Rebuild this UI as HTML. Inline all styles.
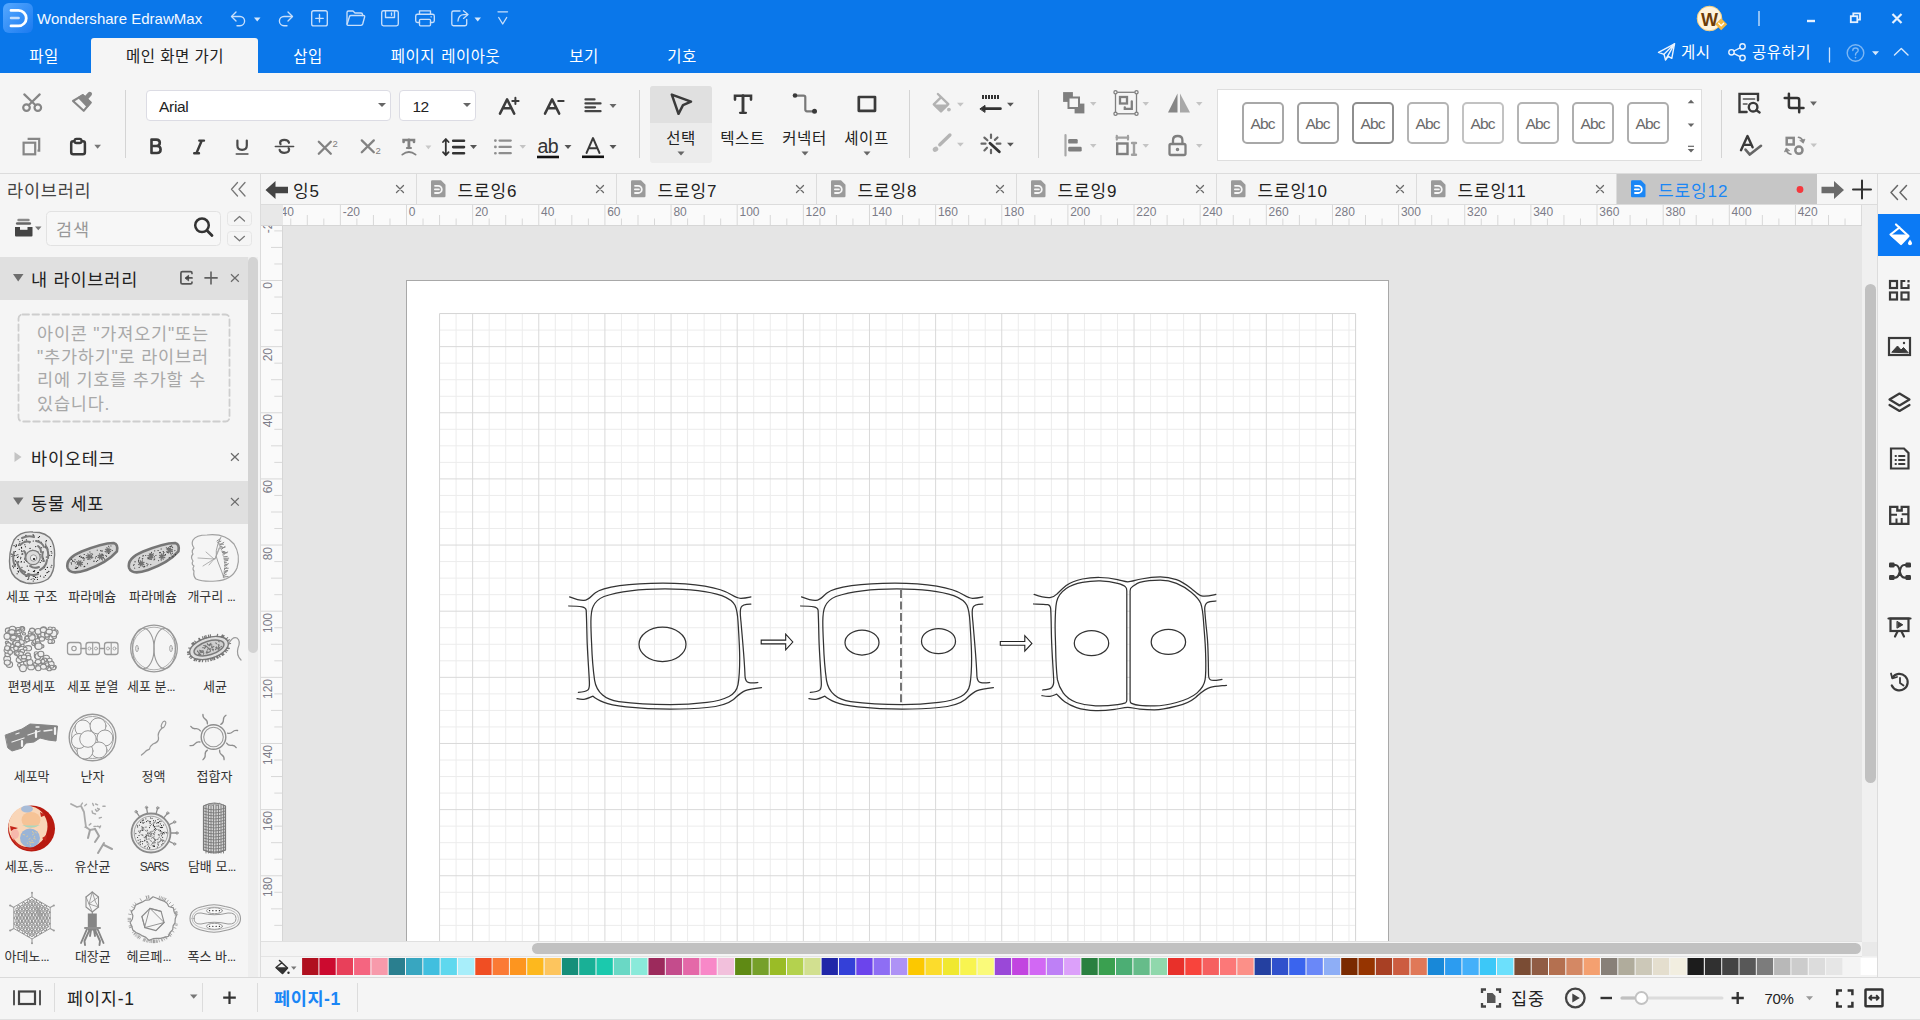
<!DOCTYPE html>
<html lang="ko">
<head>
<meta charset="utf-8">
<title>Wondershare EdrawMax</title>
<style>
*{box-sizing:border-box;margin:0;padding:0}
html,body{width:1920px;height:1020px;overflow:hidden;background:#f5f5f5}
body{font-family:"Liberation Sans","Noto Sans CJK KR",sans-serif;color:#222;position:relative}
.abs{position:absolute}
.t{position:absolute;white-space:nowrap;line-height:1}
svg{position:absolute;overflow:visible}
#titlebar{position:absolute;left:0;top:0;width:1920px;height:73px;background:#0a77ea}
#maintab{position:absolute;left:91px;top:38px;width:167px;height:36px;background:#f5f5f5;border-radius:3px 3px 0 0}
.menu{position:absolute;top:46.5px;letter-spacing:0.5px;font-size:15.5px;color:#fff;white-space:nowrap;line-height:19px;transform:translateX(-50%)}
#ribbon{position:absolute;left:0;top:73px;width:1920px;height:100px;background:#f5f5f5}
.vsep{position:absolute;width:1px;background:#d4d4d4}
.dd{position:absolute;width:0;height:0;border-left:3.5px solid transparent;border-right:3.5px solid transparent;border-top:4px solid #555}
.dd.l{border-top-color:#bdbdbd}
.abc{position:absolute;top:102px;width:42px;height:42px;border:2px solid #aaa;border-radius:5px;background:#fff;font-size:15.5px;color:#6a6a6a;text-align:center;line-height:39px;letter-spacing:-0.8px;text-indent:-0.8px}
.tabt{top:183px;font-size:17px;letter-spacing:0.9px;color:#222}
.k{font-size:17.5px;letter-spacing:0.8px}
.rl{font-size:12px;color:#7c7c88;letter-spacing:0}
.rv{transform-origin:0 0;transform:rotate(-90deg) translateX(-100%)}
.lb{font-size:13px;color:#333}
</style>
</head>
<body>
<div id="titlebar">
  <!-- logo -->
  <svg style="left:3px;top:3px" width="30" height="30" viewBox="0 0 30 30">
    <defs><linearGradient id="lg" x1="0" y1="0" x2="1" y2="1"><stop offset="0" stop-color="#55a8ff"/><stop offset="1" stop-color="#1a7af0"/></linearGradient></defs>
    <rect x="0" y="0" width="30" height="30" rx="6" fill="url(#lg)"/>
    <path d="M8 7.4 H15.5 A7.75 7.75 0 0 1 15.5 22.9 H8" fill="none" stroke="#fff" stroke-width="2.8" stroke-linecap="round"/>
    <path d="M8 15.1 H15.6" fill="none" stroke="#c4defd" stroke-width="2.5" stroke-linecap="round"/>
  </svg>
  <div class="t" style="left:37px;top:11px;font-size:15px;color:#f4f9ff;letter-spacing:0.02px">Wondershare EdrawMax</div>
  <!-- quick access icons -->
  <svg style="left:229px;top:8px" width="290" height="22" viewBox="229 8 290 22" fill="none" stroke="#c8dffb" stroke-width="1.35" stroke-linecap="round" stroke-linejoin="round">
    <!-- undo -->
    <path d="M236 12 L231.5 16.5 L236 21"/><path d="M232 16.5 H240 A4.6 4.6 0 0 1 240 25.7 H237"/>
    <path d="M254 17.5 L260.5 17.5 L257.2 21.5 Z" fill="#d6e8fc" stroke="none"/>
    <!-- redo -->
    <path d="M288 12 L292.5 16.5 L288 21"/><path d="M292 16.5 H284 A4.6 4.6 0 0 0 284 25.7 H287"/>
    <!-- new -->
    <rect x="311.7" y="10.7" width="15.6" height="15.2" rx="2"/><path d="M319.5 14.5 V22 M315.7 18.3 H323.3"/>
    <!-- open -->
    <path d="M347 24 V12.5 Q347 11 348.5 11 H353 L355 13 H361 Q362.5 13 362.5 14.5 V15.5"/><path d="M347 24.5 L349.5 16.5 Q349.8 15.5 351 15.5 H363.5 Q365 15.5 364.6 17 L362.7 24 Q362.3 25.3 361 25.3 H348 Q347 25.3 347 24.5 Z"/>
    <!-- save -->
    <path d="M383.5 10.7 H396.5 Q398.3 10.7 398.3 12.5 V24 Q398.3 25.8 396.5 25.8 H383.5 Q381.7 25.8 381.7 24 V12.5 Q381.7 10.7 383.5 10.7 Z"/><path d="M385.5 11 V17.5 H394.5 V11"/><path d="M391.5 13 V15.3"/>
    <!-- print -->
    <path d="M419.5 14 V10.8 H430.5 V14"/><path d="M419.5 22.5 H417.5 Q415.7 22.5 415.7 20.7 V16 Q415.7 14.2 417.5 14.2 H432.5 Q434.3 14.2 434.3 16 V20.7 Q434.3 22.5 432.5 22.5 H430.5"/><rect x="419.5" y="19.3" width="11" height="6.5" rx="1"/><path d="M431 16.8 H431.3"/>
    <!-- export -->
    <path d="M460 11 H453.5 Q451.8 11 451.8 12.7 V24 Q451.8 25.7 453.5 25.7 H465 Q466.7 25.7 466.7 24 V19.5"/><path d="M463.5 10.8 L468 14.6 L463.5 18.4"/><path d="M467.5 14.6 H464 Q458.5 14.6 458 21"/>
    <path d="M474.5 17.5 L481 17.5 L477.7 21.5 Z" fill="#d6e8fc" stroke="none"/>
    <!-- customize -->
    <path d="M498 11.8 H507.5"/><path d="M498.7 17.5 L502.7 24 L506.7 17.5"/>
  </svg>
  <!-- avatar -->
  <svg style="left:1696px;top:5px" width="32" height="30" viewBox="1696 5 32 30">
    <circle cx="1709.5" cy="18.5" r="12.3" fill="#fff4dd" stroke="#f7cf7c" stroke-width="1"/>
    <path d="M1721.2 18.3 L1727.2 24.2 L1721.2 30.2 L1715.2 24.2 Z" fill="#f5b942"/>
    <path d="M1718.7 23.3 L1721.2 25.8 L1723.7 23.3" fill="none" stroke="#fff" stroke-width="1.3" stroke-linecap="round" stroke-linejoin="round"/>
    <text x="1701" y="25.5" font-family="Liberation Sans,sans-serif" font-weight="bold" font-size="18" fill="#6b3c08" letter-spacing="-1">W</text>
  </svg>
  <div class="abs" style="left:1758px;top:11px;width:2px;height:15px;background:#8dc0f6"></div>
  <svg style="left:1800px;top:10px" width="110" height="18" viewBox="1800 10 110 18" fill="none" stroke="#e6f1fe" stroke-width="1.8">
    <path d="M1807 21 H1815" stroke-width="2.4"/>
    <rect x="1850.8" y="16.2" width="6.5" height="6" /><path d="M1853.3 16 V13.4 H1860 V19.6 H1857.6"/>
    <path d="M1892.5 14 L1901.5 23 M1901.5 14 L1892.5 23" stroke-width="2.2"/>
  </svg>
  <!-- menu tabs -->
  <div id="maintab"></div>
  <div class="menu" style="left:44px">파일</div>
  <div class="menu" style="left:175px;color:#222">메인 화면 가기</div>
  <div class="menu" style="left:308px">삽입</div>
  <div class="menu" style="left:445.5px;word-spacing:1.5px">페이지 레이아웃</div>
  <div class="menu" style="left:584px">보기</div>
  <div class="menu" style="left:682px">기호</div>
  <!-- right menu -->
  <svg style="left:1656px;top:42px" width="260" height="22" viewBox="1656 42 260 22" fill="none" stroke="#eaf3fe" stroke-width="1.4" stroke-linecap="round" stroke-linejoin="round">
    <path d="M1674.5 43.8 L1658.5 52.3 L1664 54.3 L1665.5 59.8 L1668.3 56.3 L1671.8 58.3 Z"/><path d="M1674.5 43.8 L1664 54.3 M1674.5 43.8 L1665.5 59.8"/>
    <circle cx="1742.5" cy="46.5" r="2.7"/><circle cx="1731.5" cy="52.3" r="2.7"/><circle cx="1742.5" cy="58" r="2.7"/><path d="M1734 51 L1740 47.8 M1734 53.6 L1740 56.7"/>
    <path d="M1829.5 48 V62" stroke="#cfe3fb" stroke-width="1.3"/>
    <circle cx="1855.5" cy="53" r="8.3" stroke="#7db7f4"/>
    <path d="M1852.8 50.5 Q1852.8 48 1855.5 48 Q1858.2 48 1858.2 50.3 Q1858.2 51.8 1856.5 52.7 Q1855.5 53.3 1855.5 55" stroke="#7db7f4"/><path d="M1855.5 57.5 V57.8" stroke="#7db7f4" stroke-width="1.6"/>
    <path d="M1872 51.3 L1879 51.3 L1875.5 55.3 Z" fill="#d6e8fc" stroke="none"/>
    <path d="M1894.5 55 L1901.3 48.5 L1908 55" stroke="#d6e8fc"/>
  </svg>
  <div class="t" style="left:1681px;top:44.5px;font-size:15.5px;letter-spacing:0.4px;color:#fff">게시</div>
  <div class="t" style="left:1752px;top:44.5px;font-size:15.5px;letter-spacing:0.5px;color:#fff">공유하기</div>
</div>
<div id="ribbon"></div>
<!-- clipboard group -->
<svg style="left:0;top:73px" width="640" height="100" viewBox="0 73 640 100" fill="none" stroke-linecap="round" stroke-linejoin="round">
  <!-- scissors -->
  <g stroke="#868686" stroke-width="2.2">
    <path d="M24.3 94.4 L35.6 105.3 M39.7 94.4 L28.6 105.3"/><circle cx="26.5" cy="107.6" r="3.3"/><circle cx="37.8" cy="107.6" r="3.3"/>
  </g>
  <!-- format painter -->
  <g stroke="#868686" stroke-width="2.1">
    <path d="M73 101 L82.9 95.2 L90.6 102.5 L83.7 110.8 Z"/><path d="M82.9 95.2 L90.6 102.5 L87.3 106.4 L79 97.6 Z" fill="#868686"/><path d="M85.5 98.8 L89.8 94" stroke-width="4.4"/>
  </g>
  <!-- copy -->
  <g stroke="#868686" stroke-width="2.2" stroke-linejoin="miter" stroke-linecap="butt">
    <rect x="23.6" y="142.7" width="11.6" height="11.6"/><path d="M27.6 138.8 H39.2 V150.6 H37.5"/>
  </g>
  <!-- paste -->
  <g stroke="#3a3a3a" stroke-width="2.5">
    <rect x="71.2" y="141.3" width="13.7" height="12.9" rx="2"/><rect x="74.6" y="138.8" width="6.9" height="4.2" rx="1.8" fill="#f5f5f5" stroke-width="2.3"/>
  </g>
  <path d="M94.3 144.8 L101 144.8 L97.6 148.8 Z" fill="#777"/>
  <!-- B I U S -->
  <g stroke="#3a3a3a" stroke-width="2.6">
    <path d="M151.5 139.6 V153 M151.5 139.6 H156.3 Q159.8 139.6 159.8 142.8 Q159.8 146 156.3 146 H151.5 M156.3 146 H157 Q160.6 146 160.6 149.5 Q160.6 153 157 153 H151.5"/>
    <path d="M199.3 140.6 H204 M194.2 153.2 H199 M201.7 140.8 L196.5 153" stroke-width="2.4"/>
  </g>
  <g stroke="#4a4a4a" stroke-width="2.2">
    <path d="M237.4 140.6 V145.5 Q237.4 149.8 242.1 149.8 Q246.8 149.8 246.8 145.5 V140.6"/><path d="M236.3 154 H247.9" stroke-width="1.6"/>
    <path d="M275.3 146.4 H293.6" stroke-width="1.5"/><path d="M289 142.8 Q288.3 139.9 284.3 139.9 Q280.3 139.9 280.1 142.6 Q280.1 143.5 280.6 144.2 M279.6 149.8 Q280.2 152.8 284.4 152.8 Q288.9 152.8 289.1 149.8 Q289.1 148.8 288.6 148.2"/>
  </g>
  <!-- x2 x_2 -->
  <g stroke="#828282" stroke-width="2.3">
    <path d="M318.8 141.8 L330.8 153.8 M330.8 141.8 L318.8 153.8"/>
    <path d="M361.8 140.4 L373.8 152.2 M373.8 140.4 L361.8 152.2"/>
  </g>
  <text x="332.6" y="146.8" font-family="Liberation Sans,sans-serif" font-size="9.5" fill="#808080" stroke="none">2</text>
  <text x="375.5" y="154.4" font-family="Liberation Sans,sans-serif" font-size="9.5" fill="#808080" stroke="none">2</text>
  <!-- text effect T -->
  <g stroke="#828282" stroke-width="2.6">
    <path d="M403.6 142 V140 H414 V142" stroke-linejoin="miter"/><path d="M408.9 140 V147.8" stroke-width="2.8"/><path d="M406.9 148 H411" stroke-width="2"/><path d="M402.3 154.6 Q408.9 149.3 415.6 154.6" stroke-width="1.8"/>
  </g>
  <path d="M425.4 145.6 L431.4 145.6 L428.4 149.2 Z" fill="#c8c8c8"/>
  <!-- line spacing -->
  <g stroke="#333" stroke-width="1.8">
    <path d="M445.8 139.3 V154.8 M443 142 L445.8 139 L448.6 142 M443 152.2 L445.8 155.2 L448.6 152.2"/>
    <path d="M453.2 140.8 H464 M453.2 147.1 H464 M453.2 153.3 H464" stroke-width="2.6"/>
  </g>
  <path d="M470 145 L477 145 L473.5 149 Z" fill="#555"/>
  <!-- bullets -->
  <g stroke="#8e8e8e" stroke-width="2.2" stroke-linecap="round">
    <path d="M499.5 140.6 H510.8 M499.5 146.9 H510.8 M499.5 153.2 H510.8"/><path d="M495.3 140.6 H495.5 M495.3 146.9 H495.5 M495.3 153.2 H495.5" stroke-width="2.6"/>
  </g>
  <path d="M519.5 145 L526 145 L522.8 148.7 Z" fill="#c4c4c4"/>
  <!-- ab -->
  <text x="537.5" y="153" font-family="Liberation Sans,sans-serif" font-size="19.5" fill="#333" letter-spacing="-0.6">ab</text>
  <path d="M537 157 H559" stroke="#111" stroke-width="2.6" stroke-linecap="butt"/>
  <path d="M564.5 145 L571.5 145 L568 149 Z" fill="#555"/>
  <!-- font color A -->
  <path d="M586.5 153 L593 138 L599.5 153 M588.7 148.3 H597.3" stroke="#3a3a3a" stroke-width="1.9"/>
  <path d="M582 156.8 H604" stroke="#111" stroke-width="2.6" stroke-linecap="butt"/>
  <path d="M609.5 145 L616.5 145 L613 149 Z" fill="#555"/>
  <!-- A+ A- -->
  <g stroke="#3c3c3c" stroke-width="2.5">
    <path d="M500 113.6 L507.1 99.4 L514.2 113.6 M502.8 108.3 H511.4"/><path d="M512.3 100.9 H518.6 M515.4 97.8 V104" stroke-width="2"/>
    <path d="M545 113.6 L552.1 99.4 L559.2 113.6 M547.8 108.3 H556.4"/><path d="M558.2 101 H563.6" stroke-width="2"/>
  </g>
  <!-- align -->
  <g stroke="#444" stroke-width="2.3">
    <path d="M585.5 99.4 H594.5 M585.5 103.4 H600.5 M585.5 107.3 H595 M585.5 111.2 H600.5"/>
  </g>
  <path d="M609.5 104 L616.5 104 L613 108 Z" fill="#666"/>
</svg>
<div class="vsep" style="left:125px;top:90px;height:68px"></div>
<div class="abs" style="left:146px;top:90px;width:245px;height:31px;background:#fff;border:1px solid #dcdce4;border-radius:4px"></div>
<div class="t" style="left:159px;top:98.8px;font-size:15.5px;color:#222;letter-spacing:-0.3px">Arial</div>
<div class="dd" style="left:378px;top:102.5px;border-top-color:#666;border-left-width:4px;border-right-width:4px;border-top-width:4.5px"></div>
<div class="abs" style="left:399px;top:90px;width:77px;height:31px;background:#fff;border:1px solid #dcdce4;border-radius:4px"></div>
<div class="t" style="left:412.5px;top:98.8px;font-size:15.5px;color:#222;letter-spacing:-0.5px">12</div>
<div class="dd" style="left:463px;top:102.5px;border-top-color:#666;border-left-width:4px;border-right-width:4px;border-top-width:4.5px"></div>
<div class="vsep" style="left:639px;top:90px;height:68px"></div>
<!-- big tool buttons -->
<div class="abs" style="left:650px;top:86px;width:62px;height:77px;background:#ececec;border-radius:3px"></div>
<div class="abs" style="left:650px;top:86px;width:62px;height:37px;background:#e0e0e0;border-radius:3px 3px 0 0"></div>
<svg style="left:640px;top:73px" width="600" height="100" viewBox="640 73 600 100" fill="none" stroke-linecap="round" stroke-linejoin="round">
  <!-- cursor -->
  <path d="M671.8 94.6 L691 101.6 L683 105.2 L678.5 113.8 Z" stroke="#3a3a3a" stroke-width="2.5"/>
  <!-- T -->
  <path d="M735 99.6 V95.8 H751 V99.6" stroke="#3a3a3a" stroke-width="2.6" stroke-linejoin="miter"/><path d="M743 95.8 V112.5" stroke="#3a3a3a" stroke-width="2.9"/><path d="M740 112.8 H746" stroke="#3a3a3a" stroke-width="2.2"/>
  <!-- connector -->
  <path d="M797 95.6 H803.6 Q805.3 95.6 805.3 97.3 V109.6 Q805.3 111.3 807 111.3 H812" stroke="#787878" stroke-width="2.2"/>
  <circle cx="795" cy="95.5" r="2.3" fill="#3a3a3a"/><circle cx="814.5" cy="111.3" r="2.5" fill="#3a3a3a"/>
  <!-- shape -->
  <rect x="858.8" y="97" width="16.2" height="13.8" stroke="#3a3a3a" stroke-width="2.7" stroke-linejoin="round"/>
  <!-- dropdowns -->
  <path d="M677.5 151.5 L684.5 151.5 L681 155.5 Z" fill="#666"/>
  <path d="M801.5 151.5 L808.5 151.5 L805 155.5 Z" fill="#666"/>
  <path d="M863.5 151.5 L870.5 151.5 L867 155.5 Z" fill="#666"/>
  <!-- fill (disabled) -->
  <g stroke="#b2b2b2" stroke-width="2.4">
    <path d="M937.9 94 L948.3 104.2 L941 111.5 L933.8 104.3 L941.2 97.2"/><path d="M935 105.2 H947 L941 111 Z" fill="#b2b2b2" stroke-width="1.6"/>
  </g>
  <circle cx="948.9" cy="109.6" r="1.9" fill="#b8b8b8"/>
  <path d="M957 102.8 L963.8 102.8 L960.4 106.4 Z" fill="#c4c4c4"/>
  <!-- line style -->
  <path d="M982 97 H999" stroke="#333" stroke-width="4" stroke-dasharray="2 1" stroke-linecap="butt"/>
  <path d="M984.5 108.7 H1000.4" stroke="#333" stroke-width="2.8" stroke-linecap="round"/><path d="M980.2 108.7 L985 105.4 V112 Z" fill="#333" stroke="#333" stroke-width="1" stroke-linejoin="round"/>
  <path d="M1007 102.8 L1013.8 102.8 L1010.4 106.6 Z" fill="#555"/>
  <!-- brush (disabled) -->
  <path d="M949.9 135 L939.8 144.8" stroke="#b4b4b4" stroke-width="3.4"/><ellipse cx="935.5" cy="149.3" rx="2.9" ry="2.4" transform="rotate(-35 935.5 149.3)" fill="#b8b8b8"/>
  <path d="M957 142.8 L963.8 142.8 L960.4 146.4 Z" fill="#c4c4c4"/>
  <!-- magic wand -->
  <g stroke="#686868" stroke-width="2.2">
    <path d="M991 134.6 V138 M991 149.9 V153.2 M981.5 143.7 H985.5 M996.7 143.7 H1000.4 M984.4 137.6 L987.4 140.3 M994.9 139.9 L997.5 137.5 M984.4 150.4 L987 147.7"/><path d="M990 143.2 L999.3 151.7" stroke="#333" stroke-width="2.9"/>
  </g>
  <path d="M1007 142.8 L1013.8 142.8 L1010.4 146.6 Z" fill="#555"/>
  <!-- arrange -->
  <g stroke="#7f7f7f" stroke-width="1.8" stroke-linejoin="miter">
    <rect x="1064" y="93" width="8" height="8" fill="#7f7f7f"/><rect x="1075.5" y="104.5" width="8" height="8" fill="#7f7f7f"/><rect x="1068.5" y="97.5" width="10.5" height="10.5" fill="#f5f5f5" stroke-width="2"/>
  </g>
  <path d="M1090 102 L1096.5 102 L1093.3 105.7 Z" fill="#c4c4c4"/>
  <!-- group -->
  <g stroke="#7f7f7f" stroke-width="1.3" stroke-linejoin="miter">
    <rect x="1115.5" y="92.3" width="21" height="21.5"/>
    <circle cx="1115.5" cy="92.3" r="1.6" fill="#f5f5f5"/><circle cx="1136.5" cy="92.3" r="1.6" fill="#f5f5f5"/><circle cx="1115.5" cy="113.8" r="1.6" fill="#f5f5f5"/><circle cx="1136.5" cy="113.8" r="1.6" fill="#f5f5f5"/>
    <rect x="1120" y="97" width="7" height="6.5" stroke-width="2.3"/><path d="M1131.8 101.3 V108.8 H1124.8 V107.3" stroke-width="2.3"/>
  </g>
  <path d="M1142.5 102 L1149 102 L1145.8 105.7 Z" fill="#c4c4c4"/>
  <!-- flip -->
  <path d="M1177.5 93.5 V112.5 H1168 Z" fill="#868686"/><path d="M1180 93.5 V112.5 H1190 Z" fill="#a8a8a8"/>
  <path d="M1196 102 L1202.5 102 L1199.3 105.7 Z" fill="#c4c4c4"/>
  <!-- align -->
  <path d="M1065.5 135 V155.5" stroke="#a8a8a8" stroke-width="2.2"/><rect x="1068.2" y="139" width="9.5" height="4.6" rx="1.2" fill="#7f7f7f"/><rect x="1068.2" y="146.8" width="13.5" height="4.6" rx="1.2" fill="#7f7f7f"/>
  <path d="M1090 144 L1096.5 144 L1093.3 147.7 Z" fill="#c4c4c4"/>
  <!-- size -->
  <g stroke="#7f7f7f" stroke-width="2" stroke-linejoin="miter">
    <rect x="1117.2" y="143.5" width="10.3" height="10.5" stroke-width="2.4"/><path d="M1116.5 137.7 H1128.2 M1116.8 135.8 V139.6 M1128 135.8 V139.6" stroke-width="2.2" stroke="#a0a0a0"/><path d="M1134 143 V154.8 M1132 143 H1136 M1132 154.8 H1136" stroke-width="2.4" stroke="#a0a0a0"/>
  </g>
  <path d="M1142.5 144 L1149 144 L1145.8 147.7 Z" fill="#c4c4c4"/>
  <!-- lock -->
  <g stroke="#7f7f7f" stroke-width="2.3">
    <rect x="1169.5" y="144" width="16" height="11" rx="1.5"/><path d="M1173 143.5 V140.3 Q1173 136 1177.7 136 Q1182.4 136 1182.4 140.3 V143.5"/><circle cx="1177.5" cy="149.5" r="0.6" fill="#7f7f7f"/>
  </g>
  <path d="M1196 144 L1202.5 144 L1199.3 147.7 Z" fill="#c4c4c4"/>
</svg>
<div class="t" style="left:681px;top:130.5px;font-size:15.5px;letter-spacing:0.5px;color:#222;transform:translateX(-50%)">선택</div>
<div class="t" style="left:742.5px;top:130.5px;font-size:15.5px;letter-spacing:0.5px;color:#222;transform:translateX(-50%)">텍스트</div>
<div class="t" style="left:804.5px;top:130.5px;font-size:15.5px;letter-spacing:0.5px;color:#222;transform:translateX(-50%)">커넥터</div>
<div class="t" style="left:866.5px;top:130.5px;font-size:15.5px;letter-spacing:0.5px;color:#222;transform:translateX(-50%)">셰이프</div>
<div class="vsep" style="left:909px;top:90px;height:68px"></div>
<div class="vsep" style="left:1038px;top:90px;height:68px"></div>
<!-- style gallery -->
<div class="abs" style="left:1217px;top:89px;width:485px;height:72px;background:#fff;border:1px solid #dedede"></div>
<div class="abc" style="left:1242px;border-color:#a8a8a8">Abc</div>
<div class="abc" style="left:1297px;border-color:#a0a0a0">Abc</div>
<div class="abc" style="left:1352px;border-color:#8e8e8e">Abc</div>
<div class="abc" style="left:1407px;border-color:#b4b4b4">Abc</div>
<div class="abc" style="left:1462px;border-color:#c2c2c2">Abc</div>
<div class="abc" style="left:1517px;border-color:#b4b4b4">Abc</div>
<div class="abc" style="left:1572px;border-color:#aeaeae">Abc</div>
<div class="abc" style="left:1627px;border-color:#aeaeae">Abc</div>
<svg style="left:1685px;top:95px" width="12" height="62" viewBox="1685 95 12 62">
  <path d="M1687.7 103.3 L1691 99.8 L1694.3 103.3 Z" fill="#666"/><path d="M1687.7 123.5 L1691 127 L1694.3 123.5 Z" fill="#666"/>
  <path d="M1687.7 149 L1691 152.5 L1694.3 149 Z" fill="#666"/><path d="M1688 146.3 H1694" stroke="#666" stroke-width="1.2"/>
</svg>
<div class="vsep" style="left:1721px;top:90px;height:68px"></div>
<svg style="left:1730px;top:85px" width="100" height="80" viewBox="1730 85 100 80" fill="none" stroke-linecap="round" stroke-linejoin="round">
  <!-- find -->
  <g stroke="#3a3a3a" stroke-width="2.4">
    <path d="M1746.6 112 H1739.5 V93.9 H1758 V100.2" stroke-linejoin="miter"/><path d="M1743.6 99 H1754.4 M1743.6 103.9 H1746.8" stroke="#7a7a7a" stroke-width="2"/>
    <circle cx="1753.1" cy="107.2" r="4.3"/><path d="M1756.4 110.3 L1759.6 112.4"/>
  </g>
  <!-- crop -->
  <g stroke="#333" stroke-width="2.5" stroke-linecap="round" stroke-linejoin="round">
    <path d="M1788.9 93.8 V106 Q1788.9 108 1790.9 108 H1803.5 M1784.7 97.9 H1797.2 Q1799.2 97.9 1799.2 99.9 V112.3"/>
  </g>
  <path d="M1810.1 101.6 L1816.9 101.6 L1813.5 105.8 Z" fill="#666"/>
  <!-- spell check -->
  <g stroke="#3a3a3a" stroke-width="2.4">
    <path d="M1741 150.2 L1747.5 136 L1752.6 147.3 M1743.6 144.9 H1751.4"/><path d="M1745.5 149.6 L1749.8 154.6 L1761 145.8" stroke="#666" stroke-width="2.6"/>
  </g>
  <!-- replace shape -->
  <g stroke="#888" stroke-width="2.5">
    <rect x="1786.7" y="137.9" width="7" height="6.6" stroke-linejoin="miter"/><circle cx="1798.9" cy="150.2" r="3.6"/>
    <path d="M1798.5 137.3 Q1802 138 1802.8 141" stroke-width="1.6"/><path d="M1800 140.6 L1803.3 143.2 L1804.8 139.6 Z" fill="#888" stroke-width="0.8"/>
    <path d="M1791 154.2 Q1787.5 153.8 1786.6 150.8" stroke-width="1.6"/><path d="M1784.6 151.5 L1786.2 148 L1789.4 150.4 Z" fill="#888" stroke-width="0.8"/>
  </g>
  <path d="M1810.5 143.5 L1817 143.5 L1813.8 147.2 Z" fill="#c4c4c4"/>
</svg>
<!-- separator line under ribbon -->
<div class="abs" style="left:0;top:173px;width:1920px;height:1px;background:#dcdcdc"></div>
<!-- left library panel -->
<div class="abs" style="left:260px;top:174px;width:1px;height:804px;background:#dcdcdc"></div>
<div class="t" style="left:7px;top:183px;font-size:17.5px;letter-spacing:0.8px;color:#444">라이브러리</div>
<svg style="left:0;top:174px" width="260" height="130" viewBox="0 174 260 130" fill="none" stroke-linecap="round" stroke-linejoin="round">
  <path d="M237.5 182.5 L231.5 189.3 L237.5 196 M245 182.5 L239 189.3 L245 196" stroke="#777" stroke-width="1.3"/>
  <!-- library icon -->
  <path d="M18.6 220 H28.4" stroke="#8a8a8a" stroke-width="2.6"/><path d="M17.2 223.5 H29.8" stroke="#666" stroke-width="2.6"/>
  <path d="M15 227 H32.5 V235.5 Q32.5 236.5 31.5 236.5 H16 Q15 236.5 15 235.5 Z" fill="#444" stroke="none"/><path d="M20 227 V229.8 H27.5 V227" fill="#f5f5f5" stroke="none"/>
  <path d="M35 226.5 L41.5 226.5 L38.3 230.2 Z" fill="#777"/>
  <!-- search box -->
  <rect x="46.5" y="211.5" width="174" height="34" rx="4" stroke="#e2e2e2" fill="#f7f7f7"/>
  <circle cx="202" cy="225.3" r="6.8" stroke="#333" stroke-width="2.5"/><path d="M207 230.5 L212 235.6" stroke="#333" stroke-width="2.8"/>
  <rect x="227.5" y="211.5" width="24" height="14" rx="3" stroke="#e6e6e6"/><rect x="227.5" y="231.5" width="24" height="14" rx="3" stroke="#e6e6e6"/>
  <path d="M234.5 221 L239.5 216.5 L244.5 221 M234.5 236.3 L239.5 240.8 L244.5 236.3" stroke="#777" stroke-width="1.2"/>
</svg>
<div class="t" style="left:56px;top:222px;font-size:17.5px;letter-spacing:0.8px;color:#999">검색</div>
<!-- scroll track -->
<div class="abs" style="left:248px;top:257px;width:10px;height:721px;background:#eeeeee"></div>
<div class="abs" style="left:248px;top:257px;width:10px;height:396px;background:#d3d3d3;border-radius:5px"></div>
<!-- my library header -->
<div class="abs" style="left:0;top:257px;width:248px;height:43px;background:#e0e0e0"></div>
<div class="t" style="left:31px;top:271.8px;font-size:17.5px;letter-spacing:0.8px;color:#222">내 라이브러리</div>
<svg style="left:0;top:257px" width="248" height="270" viewBox="0 257 248 270" fill="none" stroke-linecap="round" stroke-linejoin="round">
  <path d="M13 274 L23.5 274 L18.2 281.5 Z" fill="#6e6e6e"/>
  <path d="M192 273.4 V273.2 Q192 271.7 190.5 271.7 H182.4 Q180.9 271.7 180.9 273.2 V282.4 Q180.9 283.9 182.4 283.9 H190.5 Q192 283.9 192 282.4 V282.2" stroke="#555" stroke-width="1.7"/><path d="M192 277.9 H186.5" stroke="#555" stroke-width="1.7"/><path d="M185.3 277.9 L188.6 275.3 V280.5 Z" fill="#444" stroke="#444" stroke-width="0.8"/>
  <path d="M211 271.5 V284.4 M204.4 277.9 H217.7" stroke="#606060" stroke-width="1.6" stroke-linecap="butt"/>
  <path d="M231 274.2 L238.8 281.8 M238.8 274.2 L231 281.8" stroke="#6a6a6a" stroke-width="1.2" stroke-linecap="butt"/>
  <!-- dashed box -->
  <rect x="18.5" y="314.5" width="211" height="107" rx="4" stroke="#cecece" stroke-width="1.8" stroke-dasharray="6.5 3.5"/>
  <!-- biotech -->
  <path d="M14.5 452 L21.5 457 L14.5 462 Z" fill="#c4c4c4"/>
  <path d="M231 453.2 L238.8 460.8 M238.8 453.2 L231 460.8" stroke="#6a6a6a" stroke-width="1.2" stroke-linecap="butt"/>
</svg>
<div class="t k" style="left:37px;top:326px;color:#a8a8a8">아이콘 "가져오기"또는</div>
<div class="t k" style="left:37px;top:349px;color:#a8a8a8">"추가하기"로 라이브러</div>
<div class="t k" style="left:37px;top:372.3px;color:#a8a8a8">리에 기호를 추가할 수</div>
<div class="t k" style="left:37px;top:396px;color:#a8a8a8">있습니다.</div>

<div class="t" style="left:31px;top:451px;font-size:17.5px;letter-spacing:0.8px;color:#222">바이오테크</div>
<div class="abs" style="left:0;top:481px;width:248px;height:43px;background:#e0e0e0"></div>
<div class="t" style="left:31px;top:496.3px;font-size:17.5px;letter-spacing:0.8px;color:#222">동물 세포</div>
<svg style="left:0;top:481px" width="248" height="43" viewBox="0 481 248 43" fill="none" stroke-linecap="round">
  <path d="M13 497.5 L23.5 497.5 L18.2 505 Z" fill="#6e6e6e"/>
  <path d="M231 498 L238.8 505.6 M238.8 498 L231 505.6" stroke="#6a6a6a" stroke-width="1.2" stroke-linecap="butt"/>
</svg>
<!-- document tabs -->
<div class="abs" style="left:261px;top:204px;width:1616px;height:1px;background:#dcdcdc"></div>
<div class="abs" style="left:1617px;top:174px;width:200px;height:30px;background:#c6c6c6"></div>
<div class="abs" style="left:416px;top:174px;width:1px;height:30px;background:#dcdcdc"></div>
<div class="abs" style="left:616px;top:174px;width:1px;height:30px;background:#dcdcdc"></div>
<div class="abs" style="left:816px;top:174px;width:1px;height:30px;background:#dcdcdc"></div>
<div class="abs" style="left:1016px;top:174px;width:1px;height:30px;background:#dcdcdc"></div>
<div class="abs" style="left:1216px;top:174px;width:1px;height:30px;background:#dcdcdc"></div>
<div class="abs" style="left:1416px;top:174px;width:1px;height:30px;background:#dcdcdc"></div>
<div class="abs" style="left:1616px;top:174px;width:1px;height:30px;background:#dcdcdc"></div>
<svg style="left:261px;top:174px" width="1616" height="30" viewBox="261 174 1616 30" fill="none" stroke-linecap="round" stroke-linejoin="round">
<path d="M265.5 190 L275.5 181 V186.8 H288 V193.2 H275.5 V199 Z" fill="#444"/>
<path d="M396.5 185.5 L403.5 192.5 M403.5 185.5 L396.5 192.5" stroke="#6a6a6a" stroke-width="1.3"/>
<path d="M431.0 181.5 Q431.0 180.3 432.2 180.3 H441.0 L445.5 184.8 V196 Q445.5 197.2 444.3 197.2 H432.2 Q431.0 197.2 431.0 196 Z" fill="#9a9a9a"/><path d="M435.0 185.8 H438.2 A3.6 3.6 0 0 1 438.2 193 H435.0" stroke="#f5f5f5" stroke-width="1.8"/><path d="M434.8 189.4 H439.0" stroke="#f5f5f5" stroke-width="1.6"/>
<path d="M596.5 185.5 L603.5 192.5 M603.5 185.5 L596.5 192.5" stroke="#6a6a6a" stroke-width="1.3"/>
<path d="M631.0 181.5 Q631.0 180.3 632.2 180.3 H641.0 L645.5 184.8 V196 Q645.5 197.2 644.3 197.2 H632.2 Q631.0 197.2 631.0 196 Z" fill="#9a9a9a"/><path d="M635.0 185.8 H638.2 A3.6 3.6 0 0 1 638.2 193 H635.0" stroke="#f5f5f5" stroke-width="1.8"/><path d="M634.8 189.4 H639.0" stroke="#f5f5f5" stroke-width="1.6"/>
<path d="M796.5 185.5 L803.5 192.5 M803.5 185.5 L796.5 192.5" stroke="#6a6a6a" stroke-width="1.3"/>
<path d="M831.0 181.5 Q831.0 180.3 832.2 180.3 H841.0 L845.5 184.8 V196 Q845.5 197.2 844.3 197.2 H832.2 Q831.0 197.2 831.0 196 Z" fill="#9a9a9a"/><path d="M835.0 185.8 H838.2 A3.6 3.6 0 0 1 838.2 193 H835.0" stroke="#f5f5f5" stroke-width="1.8"/><path d="M834.8 189.4 H839.0" stroke="#f5f5f5" stroke-width="1.6"/>
<path d="M996.5 185.5 L1003.5 192.5 M1003.5 185.5 L996.5 192.5" stroke="#6a6a6a" stroke-width="1.3"/>
<path d="M1031.0 181.5 Q1031.0 180.3 1032.2 180.3 H1041.0 L1045.5 184.8 V196 Q1045.5 197.2 1044.3 197.2 H1032.2 Q1031.0 197.2 1031.0 196 Z" fill="#9a9a9a"/><path d="M1035.0 185.8 H1038.2 A3.6 3.6 0 0 1 1038.2 193 H1035.0" stroke="#f5f5f5" stroke-width="1.8"/><path d="M1034.8 189.4 H1039.0" stroke="#f5f5f5" stroke-width="1.6"/>
<path d="M1196.5 185.5 L1203.5 192.5 M1203.5 185.5 L1196.5 192.5" stroke="#6a6a6a" stroke-width="1.3"/>
<path d="M1231.0 181.5 Q1231.0 180.3 1232.2 180.3 H1241.0 L1245.5 184.8 V196 Q1245.5 197.2 1244.3 197.2 H1232.2 Q1231.0 197.2 1231.0 196 Z" fill="#9a9a9a"/><path d="M1235.0 185.8 H1238.2 A3.6 3.6 0 0 1 1238.2 193 H1235.0" stroke="#f5f5f5" stroke-width="1.8"/><path d="M1234.8 189.4 H1239.0" stroke="#f5f5f5" stroke-width="1.6"/>
<path d="M1396.5 185.5 L1403.5 192.5 M1403.5 185.5 L1396.5 192.5" stroke="#6a6a6a" stroke-width="1.3"/>
<path d="M1431.0 181.5 Q1431.0 180.3 1432.2 180.3 H1441.0 L1445.5 184.8 V196 Q1445.5 197.2 1444.3 197.2 H1432.2 Q1431.0 197.2 1431.0 196 Z" fill="#9a9a9a"/><path d="M1435.0 185.8 H1438.2 A3.6 3.6 0 0 1 1438.2 193 H1435.0" stroke="#f5f5f5" stroke-width="1.8"/><path d="M1434.8 189.4 H1439.0" stroke="#f5f5f5" stroke-width="1.6"/>
<path d="M1596.5 185.5 L1603.5 192.5 M1603.5 185.5 L1596.5 192.5" stroke="#6a6a6a" stroke-width="1.3"/>
<path d="M1631 181.5 Q1631 180.3 1632.2 180.3 H1641 L1645.5 184.8 V196 Q1645.5 197.2 1644.3 197.2 H1632.2 Q1631 197.2 1631 196 Z" fill="#1a86f5"/><path d="M1635 185.8 H1638.2 A3.6 3.6 0 0 1 1638.2 193 H1635" stroke="#fff" stroke-width="1.8"/><path d="M1634.8 189.4 H1639" stroke="#fff" stroke-width="1.6"/>
<circle cx="1800" cy="189.5" r="3.4" fill="#f5383d"/>
<path d="M1844 190 L1834 181 V186.8 H1821.5 V193.2 H1834 V199 Z" fill="#6a6a6a"/>
<path d="M1862 180.5 V198.5 M1853 189.5 H1871" stroke="#333" stroke-width="2"/>
</svg>
<div class="t tabt" style="left:293px">잉5</div>
<div class="t tabt" style="left:457.5px">드로잉6</div>
<div class="t tabt" style="left:657.5px">드로잉7</div>
<div class="t tabt" style="left:857.5px">드로잉8</div>
<div class="t tabt" style="left:1057.5px">드로잉9</div>
<div class="t tabt" style="left:1257.5px">드로잉10</div>
<div class="t tabt" style="left:1457.5px">드로잉11</div>
<div class="t tabt" style="left:1658px;color:#1a86f5">드로잉12</div>
<div class="abs" style="left:283px;top:226px;width:1579px;height:715px;background:#e5e5e5;overflow:hidden">
<div class="abs" style="left:123.0px;top:54.0px;width:983.2px;height:694.5px;background:#fff;border:1px solid #a8a8a8"></div>
<svg style="left:0;top:0" width="1579" height="715" viewBox="0 0 1579 715" fill="none">
<path d="M173.10 87.57 V715.90 M206.18 87.57 V715.90 M222.71 87.57 V715.90 M239.25 87.57 V715.90 M272.31 87.57 V715.90 M288.85 87.57 V715.90 M305.38 87.57 V715.90 M338.45 87.57 V715.90 M354.99 87.57 V715.90 M371.52 87.57 V715.90 M404.59 87.57 V715.90 M421.13 87.57 V715.90 M437.67 87.57 V715.90 M470.74 87.57 V715.90 M487.27 87.57 V715.90 M503.81 87.57 V715.90 M536.88 87.57 V715.90 M553.41 87.57 V715.90 M569.94 87.57 V715.90 M603.01 87.57 V715.90 M619.55 87.57 V715.90 M636.09 87.57 V715.90 M669.15 87.57 V715.90 M685.69 87.57 V715.90 M702.23 87.57 V715.90 M735.29 87.57 V715.90 M751.83 87.57 V715.90 M768.37 87.57 V715.90 M801.43 87.57 V715.90 M817.97 87.57 V715.90 M834.50 87.57 V715.90 M867.57 87.57 V715.90 M884.11 87.57 V715.90 M900.64 87.57 V715.90 M933.72 87.57 V715.90 M950.25 87.57 V715.90 M966.78 87.57 V715.90 M999.86 87.57 V715.90 M1016.39 87.57 V715.90 M1032.92 87.57 V715.90 M1065.99 87.57 V715.90 M156.57 104.10 H1072.61 M156.57 137.18 H1072.61 M156.57 153.71 H1072.61 M156.57 170.25 H1072.61 M156.57 203.31 H1072.61 M156.57 219.85 H1072.61 M156.57 236.38 H1072.61 M156.57 269.45 H1072.61 M156.57 285.99 H1072.61 M156.57 302.52 H1072.61 M156.57 335.59 H1072.61 M156.57 352.13 H1072.61 M156.57 368.67 H1072.61 M156.57 401.74 H1072.61 M156.57 418.27 H1072.61 M156.57 434.81 H1072.61 M156.57 467.88 H1072.61 M156.57 484.41 H1072.61 M156.57 500.94 H1072.61 M156.57 534.01 H1072.61 M156.57 550.55 H1072.61 M156.57 567.09 H1072.61 M156.57 600.15 H1072.61 M156.57 616.69 H1072.61 M156.57 633.23 H1072.61 M156.57 666.29 H1072.61 M156.57 682.83 H1072.61 M156.57 699.37 H1072.61" stroke="#ececec" stroke-width="1"/>
<path d="M189.64 87.57 V715.90 M255.78 87.57 V715.90 M321.92 87.57 V715.90 M388.06 87.57 V715.90 M454.20 87.57 V715.90 M520.34 87.57 V715.90 M586.48 87.57 V715.90 M652.62 87.57 V715.90 M718.76 87.57 V715.90 M784.90 87.57 V715.90 M851.04 87.57 V715.90 M917.18 87.57 V715.90 M983.32 87.57 V715.90 M1049.46 87.57 V715.90 M156.57 120.64 H1072.61 M156.57 186.78 H1072.61 M156.57 252.92 H1072.61 M156.57 319.06 H1072.61 M156.57 385.20 H1072.61 M156.57 451.34 H1072.61 M156.57 517.48 H1072.61 M156.57 583.62 H1072.61 M156.57 649.76 H1072.61 M156.57 715.90 H1072.61" stroke="#d9d9d9" stroke-width="1"/>
<path d="M156.57 720 V87.57 H1072.61 V720" stroke="#d4d4d4" stroke-width="1"/>
</svg>
<svg style="left:0;top:0" width="1579" height="715" viewBox="283 226 1579 715" fill="none" stroke="#333" stroke-width="1.25" stroke-linecap="round" stroke-linejoin="round">
<g>
<path d="M569.6 596.9 C575 599 580 600.8 584 600.4 C589 600 591 596 595 593 C603 586.5 630 583 663 583 C695 583 720 587.5 731 594.5 C735 597 737 598.5 741 598.3 C745 598.2 748 597.5 750.9 596.9"/>
<path d="M750.9 604.1 C746 604 742 604.8 741 607.5 C739.5 611 740.5 617 741 622 C742.5 640 744.5 660 745 675.9 C745.2 680 746 682 749 682.6 C752 683.2 755 682.8 757.8 682.5"/>
<path d="M761.5 687.6 C755 688.3 749 689 745.3 690.6 C740 692.8 737 696.5 733.5 699.4 C727 704.5 715 706.8 707 707.5 C695 708.6 682 709 670.3 709 C655 709 638 708 626 706.8 C617 705.8 609 704.5 604 702.4 C599 700.3 595.5 698.5 593 696.2 C590.5 697 588 698.5 585 699.1 C582 699.7 579.5 699.2 577 698.7"/>
<path d="M568.8 606 C574 606.1 578 606.2 582 606.8 C585 607.3 586 608.5 586.2 610.4 C586.8 622 586.8 633 587.2 643.5 C587.8 657 588.8 670 589.4 681.8 C589.6 686 589.5 688.5 588 689.9 C586 691.8 582 692.2 578.4 692.4"/>
<path d="M590.9 621.5 C591 615 591.5 610 593 606.8 C595 602 599 598.5 604 596.5 C620 591 645 588.8 665 588.8 C690 588.8 710 591.5 721.8 595.7 C729 598.5 733 601.5 735 605.3 C737 610 737.7 616 738 621.5 C738.8 634 739.7 647 739.7 658.2 C739.7 668 739.2 678 738 684.7 C737 690 734 694 729 696.5 C722 700 714 701.6 707 702.4 C695 703.8 682 704.6 670.3 704.6 C652 704.6 633 703.5 618.8 701.6 C611 700.5 606 698 602.6 695 C598 691 595.5 686 594.6 680.3 C592.8 668 592 655 591.6 643.5 C591.2 636 590.9 628 590.9 621.5 Z"/>
</g>
<ellipse cx="662.5" cy="644.3" rx="23.5" ry="17.2"/>
<g transform="translate(231.9 0)">
<path d="M569.6 596.9 C575 599 580 600.8 584 600.4 C589 600 591 596 595 593 C603 586.5 630 583 663 583 C695 583 720 587.5 731 594.5 C735 597 737 598.5 741 598.3 C745 598.2 748 597.5 750.9 596.9"/>
<path d="M750.9 604.1 C746 604 742 604.8 741 607.5 C739.5 611 740.5 617 741 622 C742.5 640 744.5 660 745 675.9 C745.2 680 746 682 749 682.6 C752 683.2 755 682.8 757.8 682.5"/>
<path d="M761.5 687.6 C755 688.3 749 689 745.3 690.6 C740 692.8 737 696.5 733.5 699.4 C727 704.5 715 706.8 707 707.5 C695 708.6 682 709 670.3 709 C655 709 638 708 626 706.8 C617 705.8 609 704.5 604 702.4 C599 700.3 595.5 698.5 593 696.2 C590.5 697 588 698.5 585 699.1 C582 699.7 579.5 699.2 577 698.7"/>
<path d="M568.8 606 C574 606.1 578 606.2 582 606.8 C585 607.3 586 608.5 586.2 610.4 C586.8 622 586.8 633 587.2 643.5 C587.8 657 588.8 670 589.4 681.8 C589.6 686 589.5 688.5 588 689.9 C586 691.8 582 692.2 578.4 692.4"/>
<path d="M590.9 621.5 C591 615 591.5 610 593 606.8 C595 602 599 598.5 604 596.5 C620 591 645 588.8 665 588.8 C690 588.8 710 591.5 721.8 595.7 C729 598.5 733 601.5 735 605.3 C737 610 737.7 616 738 621.5 C738.8 634 739.7 647 739.7 658.2 C739.7 668 739.2 678 738 684.7 C737 690 734 694 729 696.5 C722 700 714 701.6 707 702.4 C695 703.8 682 704.6 670.3 704.6 C652 704.6 633 703.5 618.8 701.6 C611 700.5 606 698 602.6 695 C598 691 595.5 686 594.6 680.3 C592.8 668 592 655 591.6 643.5 C591.2 636 590.9 628 590.9 621.5 Z"/>
</g>
<ellipse cx="862" cy="642.5" rx="17" ry="12.5"/><ellipse cx="938.5" cy="641.2" rx="17" ry="12.5"/>
<path d="M901 589.9 V703" stroke="#666" stroke-width="1.8" stroke-dasharray="8 3.6" stroke-linecap="butt"/>
<path d="M761.2 640.1 H785.7 V634.2 L792.8000000000001 642 L785.7 649.8 V643.9 H761.2 Z" fill="#fff" stroke="#222" stroke-width="1.1" stroke-linejoin="miter"/>
<path d="M1000.3 641.5 H1024.8 V635.6 L1031.8999999999999 643.4 L1024.8 651.1999999999999 V645.3 H1000.3 Z" fill="#fff" stroke="#222" stroke-width="1.1" stroke-linejoin="miter"/>
<path d="M1034.1 594.4 C1040 596.5 1046 598 1050 597.6 C1054 597.2 1055 596 1057.5 593.5 C1060 591 1062.5 588.5 1066.2 585.6 C1071 582 1076 580.3 1082.4 579 C1088 577.9 1094 577.4 1100 577.5 C1106 577.6 1112 578.5 1117.6 579.7 C1121.5 580.5 1125 581.9 1127.9 581.9 C1131 581.9 1136 580 1141.2 579 C1147 577.8 1154 576.8 1160.3 576.8 C1166 576.8 1171.5 578 1176.5 579.7 C1182 581.6 1187 585.3 1191.2 588.5 C1195 591.4 1198 595 1201.5 595.9 C1206 597 1211 595.5 1215.9 594.4"/>
<path d="M1215.9 601 C1212 601.2 1209 601.3 1207.4 602.5 C1205 604.3 1204.6 606.5 1204.7 609.1 C1205.2 619 1206.6 629 1207.4 638.5 C1208.3 650 1208.3 662 1208.5 673.8 C1208.5 676.5 1208.6 678.8 1210.3 679.7 C1213 681.2 1218 679.9 1222 679.4"/>
<path d="M1226.5 685.3 C1221 685.9 1215 686.2 1210.3 687.4 C1204.5 689 1200 693.8 1195.6 697.4 C1190 702 1183.5 704.5 1176.5 706.2 C1169.5 708 1162 709.9 1154.4 709.9 C1149 709.9 1144.5 709.6 1139.7 709.1 C1135.5 708.7 1131.5 707.4 1127.9 707.4 C1123.5 707.4 1119 708.9 1114.7 709.4 C1108.5 710.2 1102 710.8 1095.6 710.6 C1089 710.4 1082.5 709.6 1076.5 707.6 C1072 706.1 1068.3 704.3 1064.7 701.8 C1061.5 699.5 1059 696.5 1056.6 694.1 C1054.5 695 1052.5 696 1050 696.3 C1047 696.7 1044.5 696.1 1041.9 695.6"/>
<path d="M1033.5 604 C1038 604.1 1043.5 604 1047.8 604.7 C1049.8 605.1 1050.5 606.8 1050.7 609.1 C1051.3 619 1051.2 629 1051.5 638.5 C1051.9 652 1053 666 1053.7 679.7 C1053.9 683 1053.5 686 1051.5 687.8 C1049.3 689.7 1046 689.8 1042.6 690"/>
<path d="M1055.1 625 C1055.2 617 1055.3 608 1056.6 601.8 C1057.8 596 1061.5 591.8 1066.2 588.5 C1071 585.2 1076.5 583.5 1082.4 582.4 C1088 581.3 1094 580.8 1100 580.9 C1106 581 1112 581.8 1117.6 583.4 C1121 584.3 1124 585.3 1125.7 587.1 C1126.6 588 1126.8 589.5 1126.8 591 L1126.8 700 C1126.8 701.5 1126.5 702.3 1125.5 702.8 C1123 703.8 1120.5 704.3 1117.6 704.7 C1110.5 705.6 1103 706.2 1095.6 705.9 C1089 705.6 1082.5 704.6 1076.5 702.5 C1071 700.5 1066.5 697.5 1063.2 692.9 C1060.3 689 1058.4 684.5 1057.4 679.7 C1056 668.5 1055.8 657 1055.6 645.9 C1055.4 639 1055.1 632 1055.1 625 Z" fill="#fff"/><path d="M1130.1 591 C1130.1 589 1130.5 587.8 1132 587 C1134.5 585.4 1137 583.2 1139.7 582.4 C1146.5 580.5 1153.5 580 1160.3 580 C1166 580 1171.5 581.3 1176.5 583.4 C1182 585.7 1187 588.6 1191.2 592.2 C1195 595.4 1198.8 598.8 1200.7 603.2 C1203 609.7 1203.2 617 1203.7 623.8 C1204.4 633.5 1205.4 643.5 1205.6 653.2 C1205.8 662 1206.3 671.5 1205.1 679.7 C1204.3 685 1201 689.5 1197.1 692.9 C1191.5 697.8 1183.8 700.5 1176.5 702.5 C1169.3 704.5 1161.8 705.9 1154.4 705.9 C1149.5 705.9 1144.5 705.9 1139.7 705.4 C1136.8 705.1 1134 704.3 1131.5 703.3 C1130.3 702.8 1130.1 701.8 1130.1 700.5 Z" fill="#fff"/>
<ellipse cx="1091.5" cy="643.2" rx="17.2" ry="12.5"/><ellipse cx="1168.4" cy="641.9" rx="17.2" ry="12.5"/>
</svg>
</div>
<div class="abs" style="left:261px;top:205px;width:22px;height:21px;background:#e8e8e8"></div>
<div class="abs" style="left:283px;top:205px;width:1579px;height:21px;background:#fafafa;overflow:hidden">
<svg style="left:0;top:0" width="1579" height="21" viewBox="283 205 1579 21" fill="none">
<path d="M340.36 205 V226 M406.50 205 V226 M472.64 205 V226 M538.78 205 V226 M604.92 205 V226 M671.06 205 V226 M737.20 205 V226 M803.34 205 V226 M869.48 205 V226 M935.62 205 V226 M1001.76 205 V226 M1067.90 205 V226 M1134.04 205 V226 M1200.18 205 V226 M1266.32 205 V226 M1332.46 205 V226 M1398.60 205 V226 M1464.74 205 V226 M1530.88 205 V226 M1597.02 205 V226 M1663.16 205 V226 M1729.30 205 V226 M1795.44 205 V226 M1861.58 205 V226" stroke="#d8d8d8" stroke-width="1"/><path d="M290.75 218.5 V226 M307.29 215 V226 M323.82 218.5 V226 M356.89 218.5 V226 M373.43 215 V226 M389.96 218.5 V226 M423.04 218.5 V226 M439.57 215 V226 M456.11 218.5 V226 M489.18 218.5 V226 M505.71 215 V226 M522.25 218.5 V226 M555.32 218.5 V226 M571.85 215 V226 M588.38 218.5 V226 M621.45 218.5 V226 M637.99 215 V226 M654.52 218.5 V226 M687.60 218.5 V226 M704.13 215 V226 M720.66 218.5 V226 M753.74 218.5 V226 M770.27 215 V226 M786.81 218.5 V226 M819.88 218.5 V226 M836.41 215 V226 M852.94 218.5 V226 M886.01 218.5 V226 M902.55 215 V226 M919.09 218.5 V226 M952.15 218.5 V226 M968.69 215 V226 M985.23 218.5 V226 M1018.29 218.5 V226 M1034.83 215 V226 M1051.37 218.5 V226 M1084.43 218.5 V226 M1100.97 215 V226 M1117.51 218.5 V226 M1150.57 218.5 V226 M1167.11 215 V226 M1183.64 218.5 V226 M1216.72 218.5 V226 M1233.25 215 V226 M1249.78 218.5 V226 M1282.86 218.5 V226 M1299.39 215 V226 M1315.92 218.5 V226 M1348.99 218.5 V226 M1365.53 215 V226 M1382.07 218.5 V226 M1415.13 218.5 V226 M1431.67 215 V226 M1448.20 218.5 V226 M1481.28 218.5 V226 M1497.81 215 V226 M1514.35 218.5 V226 M1547.41 218.5 V226 M1563.95 215 V226 M1580.48 218.5 V226 M1613.56 218.5 V226 M1630.09 215 V226 M1646.62 218.5 V226 M1679.69 218.5 V226 M1696.23 215 V226 M1712.76 218.5 V226 M1745.84 218.5 V226 M1762.37 215 V226 M1778.90 218.5 V226 M1811.97 218.5 V226 M1828.51 215 V226 M1845.05 218.5 V226" stroke="#d8d8d8" stroke-width="1"/>
</svg>
<div class="t rl" style="left:-6.5px;top:1px">-40</div>
<div class="t rl" style="left:59.7px;top:1px">-20</div>
<div class="t rl" style="left:125.8px;top:1px">0</div>
<div class="t rl" style="left:191.9px;top:1px">20</div>
<div class="t rl" style="left:258.1px;top:1px">40</div>
<div class="t rl" style="left:324.2px;top:1px">60</div>
<div class="t rl" style="left:390.4px;top:1px">80</div>
<div class="t rl" style="left:456.5px;top:1px">100</div>
<div class="t rl" style="left:522.6px;top:1px">120</div>
<div class="t rl" style="left:588.8px;top:1px">140</div>
<div class="t rl" style="left:654.9px;top:1px">160</div>
<div class="t rl" style="left:721.1px;top:1px">180</div>
<div class="t rl" style="left:787.2px;top:1px">200</div>
<div class="t rl" style="left:853.3px;top:1px">220</div>
<div class="t rl" style="left:919.5px;top:1px">240</div>
<div class="t rl" style="left:985.6px;top:1px">260</div>
<div class="t rl" style="left:1051.8px;top:1px">280</div>
<div class="t rl" style="left:1117.9px;top:1px">300</div>
<div class="t rl" style="left:1184.0px;top:1px">320</div>
<div class="t rl" style="left:1250.2px;top:1px">340</div>
<div class="t rl" style="left:1316.3px;top:1px">360</div>
<div class="t rl" style="left:1382.5px;top:1px">380</div>
<div class="t rl" style="left:1448.6px;top:1px">400</div>
<div class="t rl" style="left:1514.7px;top:1px">420</div>
</div>
<div class="abs" style="left:261px;top:225px;width:1601px;height:1px;background:#d6d6d6"></div>
<div class="abs" style="left:261px;top:226px;width:22px;height:716px;background:#fafafa;overflow:hidden">
<svg style="left:0;top:0" width="22" height="716" viewBox="261 226 22 716" fill="none">
<path d="M261 280.50 H283 M261 346.64 H283 M261 412.78 H283 M261 478.92 H283 M261 545.06 H283 M261 611.20 H283 M261 677.34 H283 M261 743.48 H283 M261 809.62 H283 M261 875.76 H283 M261 941.90 H283" stroke="#d8d8d8" stroke-width="1"/><path d="M274.3 230.90 H283 M271 247.43 H283 M274.3 263.96 H283 M274.3 297.04 H283 M271 313.57 H283 M274.3 330.11 H283 M274.3 363.18 H283 M271 379.71 H283 M274.3 396.25 H283 M274.3 429.31 H283 M271 445.85 H283 M274.3 462.38 H283 M274.3 495.45 H283 M271 511.99 H283 M274.3 528.52 H283 M274.3 561.60 H283 M271 578.13 H283 M274.3 594.66 H283 M274.3 627.74 H283 M271 644.27 H283 M274.3 660.81 H283 M274.3 693.88 H283 M271 710.41 H283 M274.3 726.94 H283 M274.3 760.01 H283 M271 776.55 H283 M274.3 793.09 H283 M274.3 826.15 H283 M271 842.69 H283 M274.3 859.23 H283 M274.3 892.29 H283 M271 908.83 H283 M274.3 925.37 H283" stroke="#d8d8d8" stroke-width="1"/>
</svg>
<div class="t rl rv" style="left:1px;top:-10.1px">-20</div>
<div class="t rl rv" style="left:1px;top:56.0px">0</div>
<div class="t rl rv" style="left:1px;top:122.1px">20</div>
<div class="t rl rv" style="left:1px;top:188.3px">40</div>
<div class="t rl rv" style="left:1px;top:254.4px">60</div>
<div class="t rl rv" style="left:1px;top:320.6px">80</div>
<div class="t rl rv" style="left:1px;top:386.7px">100</div>
<div class="t rl rv" style="left:1px;top:452.8px">120</div>
<div class="t rl rv" style="left:1px;top:519.0px">140</div>
<div class="t rl rv" style="left:1px;top:585.1px">160</div>
<div class="t rl rv" style="left:1px;top:651.3px">180</div>
</div>
<div class="abs" style="left:282px;top:226px;width:1px;height:716px;background:#d6d6d6"></div>
<div class="abs" style="left:261px;top:941px;width:1616px;height:16px;background:#f4f4f4;border-top:1px solid #e0e0e0;border-bottom:1px solid #e4e4e4"></div>
<div class="abs" style="left:1862px;top:205px;width:15px;height:752px;background:#f0f0f0"></div>
<div class="abs" style="left:1862px;top:942px;width:15px;height:14px;background:#e9e9e9"></div>
<div class="abs" style="left:532px;top:943px;width:1329px;height:11px;background:#c1c1c1;border-radius:5.5px"></div>
<div class="abs" style="left:1864.5px;top:284px;width:11px;height:499px;background:#c1c1c1;border-radius:5.5px"></div>
<!-- library thumbnails -->
<svg style="left:0;top:524px" width="248" height="454" viewBox="0 524 248 454" fill="none" stroke="#8c8c8c" stroke-width="1.1" stroke-linecap="round" stroke-linejoin="round">
<path d="M14 540 Q20 531 33 532 Q47 532 52 541 Q56 550 54 560 Q55 572 48 579 Q38 585 26 583 Q13 580 10 568 Q8 553 14 540 Z" fill="#e6e6e6" stroke="#7c7c7c" stroke-width="1.4"/>
<path d="M24.6 541.2h0.1 M38.3 537.5h0.1 M33.5 551.6h0.1 M13.4 558.4h0.1 M12.6 554.8h0.1 M28.8 573.7h0.1 M16.2 544.7h0.1 M37.4 579.5h0.1 M35.2 553.0h0.1 M47.1 547.9h0.1 M24.0 573.2h0.1 M18.6 561.9h0.1 M37.8 551.9h0.1 M34.0 537.0h0.1 M39.6 554.5h0.1 M24.2 562.1h0.1 M30.0 548.4h0.1 M44.4 567.6h0.1 M21.3 561.6h0.1 M33.1 576.0h0.1 M41.6 547.8h0.1 M28.6 570.3h0.1 M17.4 557.5h0.1 M12.6 566.1h0.1 M43.1 561.5h0.1 M47.8 549.1h0.1 M40.2 562.5h0.1 M35.4 555.9h0.1 M30.9 565.9h0.1 M13.5 567.7h0.1 M45.5 547.7h0.1 M27.2 566.1h0.1 M11.9 556.2h0.1 M18.1 539.6h0.1 M16.4 545.9h0.1 M27.4 575.8h0.1 M14.4 555.6h0.1 M34.1 576.4h0.1 M45.4 575.5h0.1 M22.7 553.9h0.1 M26.1 576.4h0.1 M18.4 545.1h0.1 M20.8 557.3h0.1 M35.7 546.6h0.1 M11.2 554.1h0.1 M26.5 561.2h0.1 M51.0 567.1h0.1 M32.7 563.6h0.1 M39.4 536.6h0.1 M48.8 571.4h0.1 M47.7 572.3h0.1 M27.5 553.2h0.1 M15.3 564.4h0.1 M19.8 541.8h0.1 M25.3 536.5h0.1 M15.3 551.5h0.1 M36.8 541.1h0.1 M21.6 550.7h0.1 M26.3 539.9h0.1 M30.6 557.2h0.1 M25.4 546.7h0.1 M45.8 541.7h0.1 M33.2 541.0h0.1 M33.8 535.3h0.1 M33.2 581.0h0.1 M47.3 567.4h0.1 M22.0 551.6h0.1 M18.0 571.1h0.1 M33.4 571.4h0.1 M24.8 544.7h0.1 M46.8 572.7h0.1 M45.4 569.5h0.1 M20.5 558.8h0.1 M25.9 535.4h0.1 M21.9 567.2h0.1 M51.2 555.5h0.1 M51.1 551.5h0.1 M20.3 544.9h0.1 M19.3 543.8h0.1 M37.2 577.2h0.1 M46.3 557.0h0.1 M38.4 572.4h0.1 M14.6 565.7h0.1 M42.5 556.9h0.1 M18.5 571.9h0.1 M25.0 572.4h0.1 M51.8 553.0h0.1 M27.9 579.4h0.1 M41.4 542.2h0.1 M17.1 573.7h0.1 M25.7 560.3h0.1 M51.8 565.2h0.1 M33.1 578.8h0.1 M29.2 575.8h0.1 M45.7 544.1h0.1 M21.6 548.1h0.1 M21.1 562.1h0.1 M21.9 554.1h0.1 M25.9 556.0h0.1 M35.5 577.4h0.1 M28.7 578.1h0.1 M32.1 559.5h0.1 M33.0 534.9h0.1 M29.5 542.8h0.1 M18.2 556.7h0.1 M41.5 560.7h0.1 M24.7 558.9h0.1 M34.3 571.6h0.1 M15.5 560.9h0.1 M21.4 547.3h0.1 M43.4 558.4h0.1 M34.6 570.5h0.1 M49.3 555.3h0.1 M36.7 558.3h0.1 M32.5 567.3h0.1 M30.0 559.6h0.1 M31.1 579.2h0.1 M40.4 576.1h0.1 M50.6 546.5h0.1 M34.5 579.3h0.1 M46.3 540.6h0.1 M16.1 555.2h0.1 M14.0 545.6h0.1 M14.1 566.1h0.1 M43.9 577.1h0.1 M17.5 568.4h0.1 M38.7 540.9h0.1 M27.7 557.4h0.1 M17.8 554.7h0.1 M32.7 550.3h0.1 M19.2 549.3h0.1 M34.3 555.1h0.1 M37.2 558.6h0.1 M15.4 546.7h0.1 M22.4 540.2h0.1 M28.7 577.7h0.1 M45.4 546.4h0.1 M35.0 567.6h0.1 M39.9 554.4h0.1 M37.6 572.5h0.1" stroke="#111" stroke-width="1.1"/>
<path d="M20 545 q5 -5 10 -3 M36 541 q6 1 8 6 M17 562 q2 8 8 10 M40 570 q6 -3 7 -10 M24 551 q3 3 1 8 M43 552 q-2 5 1 9 M28 574 q5 2 10 0 M22 538 q6 -3 12 -1 M46 546 q3 6 2 12 M14 552 q-2 8 1 14 M30 566 q4 3 9 1 M38 546 q3 2 3 6 M20 570 q3 5 9 6" stroke="#7a7a7a" stroke-width="2"/>
<circle cx="33" cy="557.5" r="7.2" fill="#dcdcdc" stroke="#7c7c7c" stroke-width="1.2"/><circle cx="33.5" cy="558" r="3.2" fill="#eee" stroke="#888" stroke-width="0.8"/><circle cx="34" cy="559" r="1.1" fill="#111" stroke="none"/>
<g transform="rotate(-21 92.5 557.5)"><path d="M65.5 558.5 Q66.5 548.5 84.5 548.0 Q106.5 547.5 117.5 551.5 Q121.5 554.5 117.5 560.5 Q104.5 567.5 82.5 567.0 Q65.5 566.5 65.5 558.5 Z" fill="#d6d6d6" stroke="#767676" stroke-width="2.6"/>
<path d="M74.2 561.8h0.1 M73.4 561.9h0.1 M90.5 555.6h0.1 M94.8 562.6h0.1 M82.3 553.1h0.1 M93.7 554.4h0.1 M75.3 553.4h0.1 M72.7 553.9h0.1 M84.2 555.2h0.1 M103.9 555.0h0.1 M92.5 553.6h0.1 M85.8 551.7h0.1 M81.5 551.7h0.1 M102.8 558.1h0.1 M78.8 557.2h0.1 M111.6 552.8h0.1 M106.5 556.7h0.1 M92.3 561.5h0.1 M87.8 557.6h0.1 M100.8 563.3h0.1 M85.6 561.5h0.1 M101.6 559.1h0.1 M88.3 555.7h0.1 M72.9 553.1h0.1 M73.6 560.4h0.1 M81.7 553.5h0.1 M74.2 561.6h0.1 M108.8 559.5h0.1 M82.9 554.4h0.1 M83.4 557.0h0.1 M77.4 556.8h0.1 M82.1 563.0h0.1 M113.3 558.1h0.1 M81.3 563.1h0.1 M84.1 555.8h0.1 M70.5 556.1h0.1 M91.4 557.5h0.1 M79.3 557.6h0.1 M70.7 554.7h0.1 M74.4 556.3h0.1 M72.3 551.8h0.1 M83.9 554.3h0.1 M96.3 557.9h0.1 M103.5 559.4h0.1 M102.0 562.0h0.1 M87.6 555.4h0.1 M113.8 553.3h0.1 M102.4 559.2h0.1 M72.4 561.5h0.1 M109.7 559.0h0.1 M102.8 561.2h0.1 M76.6 557.8h0.1 M92.7 561.5h0.1 M105.9 561.4h0.1 M96.2 562.2h0.1 M100.5 559.8h0.1 M80.6 551.9h0.1 M76.4 555.8h0.1 M75.1 561.5h0.1 M95.1 559.0h0.1 M98.1 559.7h0.1 M92.0 551.5h0.1 M105.6 560.5h0.1 M92.6 557.9h0.1 M99.5 552.3h0.1 M102.9 554.5h0.1 M73.8 554.7h0.1 M102.6 554.0h0.1 M103.1 563.2h0.1 M92.2 556.1h0.1" stroke="#222" stroke-width="1"/>
<path d="M75.5 558.5 h6 M78.5 555.5 v6 M76.5 556.5 l4 4 M80.5 556.5 l-4 4" stroke="#707070" stroke-width="1.2"/>
<path d="M86.5 555.5 h6 M89.5 552.5 v6 M87.5 553.5 l4 4 M91.5 553.5 l-4 4" stroke="#707070" stroke-width="1.2"/>
<path d="M97.5 559.5 h6 M100.5 556.5 v6 M98.5 557.5 l4 4 M102.5 557.5 l-4 4" stroke="#707070" stroke-width="1.2"/>
<path d="M106.5 556.5 h6 M109.5 553.5 v6 M107.5 554.5 l4 4 M111.5 554.5 l-4 4" stroke="#707070" stroke-width="1.2"/>
</g>
<g transform="rotate(-21 154 557.5)"><path d="M127 558.5 Q128 548.5 146 548.0 Q168 547.5 179 551.5 Q183 554.5 179 560.5 Q166 567.5 144 567.0 Q127 566.5 127 558.5 Z" fill="#d6d6d6" stroke="#767676" stroke-width="2.6"/>
<path d="M153.1 559.7h0.1 M165.7 558.9h0.1 M160.3 552.4h0.1 M138.5 554.5h0.1 M164.7 555.2h0.1 M157.0 551.6h0.1 M134.7 554.7h0.1 M161.6 559.8h0.1 M161.7 555.0h0.1 M154.7 557.1h0.1 M152.5 552.9h0.1 M171.3 553.9h0.1 M175.0 562.7h0.1 M132.8 557.0h0.1 M168.1 563.1h0.1 M151.8 554.7h0.1 M141.2 562.8h0.1 M141.3 558.5h0.1 M138.2 557.8h0.1 M173.9 553.1h0.1 M168.1 557.6h0.1 M171.0 559.9h0.1 M142.2 562.3h0.1 M153.4 551.8h0.1 M132.2 557.4h0.1 M151.8 555.1h0.1 M138.2 555.6h0.1 M145.9 561.6h0.1 M132.1 560.5h0.1 M168.9 552.9h0.1 M172.8 560.1h0.1 M171.7 555.0h0.1 M148.4 556.2h0.1 M175.9 558.6h0.1 M147.9 556.6h0.1 M144.1 552.1h0.1 M136.5 561.5h0.1 M144.6 562.7h0.1 M143.0 554.7h0.1 M154.5 553.8h0.1 M148.4 563.0h0.1 M170.9 561.2h0.1 M159.8 562.5h0.1 M173.4 558.1h0.1 M163.7 552.1h0.1 M164.2 556.9h0.1 M165.1 559.2h0.1 M144.6 552.1h0.1 M172.8 553.0h0.1 M152.8 555.6h0.1 M145.1 560.4h0.1 M175.0 554.6h0.1 M160.9 555.1h0.1 M156.5 556.2h0.1 M139.4 553.4h0.1 M141.1 562.4h0.1 M153.9 554.1h0.1 M171.9 563.5h0.1 M151.8 553.2h0.1 M140.5 552.6h0.1 M147.0 552.6h0.1 M142.5 554.6h0.1 M157.1 562.1h0.1 M165.0 556.5h0.1 M150.2 557.8h0.1 M148.6 555.6h0.1 M134.7 554.8h0.1 M174.6 553.0h0.1 M154.1 559.1h0.1 M170.0 554.1h0.1" stroke="#222" stroke-width="1"/>
<path d="M137 558.5 h6 M140 555.5 v6 M138 556.5 l4 4 M142 556.5 l-4 4" stroke="#707070" stroke-width="1.2"/>
<path d="M148 555.5 h6 M151 552.5 v6 M149 553.5 l4 4 M153 553.5 l-4 4" stroke="#707070" stroke-width="1.2"/>
<path d="M159 559.5 h6 M162 556.5 v6 M160 557.5 l4 4 M164 557.5 l-4 4" stroke="#707070" stroke-width="1.2"/>
<path d="M168 556.5 h6 M171 553.5 v6 M169 554.5 l4 4 M173 554.5 l-4 4" stroke="#707070" stroke-width="1.2"/>
</g>
<path d="M193 540 Q196 535 207 535 Q225 533 234 544 Q241 555 237 568 Q232 580 216 581 Q203 582 196 579 Q193 576 194 571 Q192 569 194 566 Q191 564 193 561 Q190 557 193 554 Q191 551 194 548 Q191 544 193 540 Z" stroke="#a0a0a0" stroke-width="1.2"/>
<path d="M221 537 Q213 552 218 562 Q222 572 224 578" stroke="#a0a0a0" stroke-width="1"/>
<path d="M198 558 L214 559 M203 566 L214 559 M206 552 L214 559 M209 565 L215 558 M215 559 L219 548 M215 559 L221 545" stroke="#a0a0a0" stroke-width="0.8"/>
<path d="M217.0 541.0l2.8 -2.0 M217.7 542.4l3.2 -1.2 M218.5 543.9l4.9 0.4 M219.2 545.3l4.6 -2.9 M219.9 546.8l2.1 -0.2 M220.5 548.2l4.7 -1.1 M221.1 549.6l3.8 -3.0 M221.7 551.1l3.2 0.7 M222.3 552.5l4.5 0.4 M222.8 554.0l4.9 -2.0 M223.2 555.4l2.3 -2.4 M223.6 556.8l3.6 -0.3 M223.9 558.3l4.8 -0.1 M224.1 559.7l3.9 0.1 M224.3 561.2l3.4 -0.8 M224.4 562.6l2.1 0.1 M224.5 564.0l2.7 0.7 M224.5 565.5l3.9 -1.8 M224.5 566.9l2.4 -2.0 M224.4 568.4l3.9 -0.2 M224.3 569.8l2.3 -2.7 M224.1 571.2l3.6 -0.7 M223.9 572.7l3.2 -2.1 M223.7 574.1l3.8 -3.0 M223.4 575.6l2.9 -1.2 M223.2 577.0l4.9 -0.4" stroke="#8a8a8a" stroke-width="1"/>
<ellipse cx="18.5" cy="638.1" rx="3.5" ry="3.2" stroke="#888" stroke-width="1.1" fill="#eee"/>
<ellipse cx="22.1" cy="628.9" rx="2.6" ry="2.3" stroke="#888" stroke-width="1.1" fill="#eee"/>
<ellipse cx="27.6" cy="638.5" rx="2.9" ry="2.9" stroke="#888" stroke-width="1.1" fill="#eee"/>
<ellipse cx="18.1" cy="629.4" rx="2.3" ry="1.9" stroke="#888" stroke-width="1.1" fill="#eee"/>
<ellipse cx="40.4" cy="636.1" rx="3.2" ry="2.9" stroke="#888" stroke-width="1.1" fill="#eee"/>
<ellipse cx="31.7" cy="636.4" rx="3.5" ry="2.8" stroke="#888" stroke-width="1.1" fill="#eee"/>
<ellipse cx="47.2" cy="637.5" rx="2.0" ry="1.9" stroke="#888" stroke-width="1.1" fill="#eee"/>
<ellipse cx="21.5" cy="667.0" rx="2.6" ry="2.0" stroke="#888" stroke-width="1.1" fill="#eee"/>
<ellipse cx="17.9" cy="645.1" rx="2.9" ry="2.9" stroke="#888" stroke-width="1.1" fill="#eee"/>
<ellipse cx="14.2" cy="644.1" rx="2.0" ry="2.0" stroke="#888" stroke-width="1.1" fill="#eee"/>
<ellipse cx="14.0" cy="630.1" rx="1.7" ry="1.4" stroke="#888" stroke-width="1.1" fill="#eee"/>
<ellipse cx="51.0" cy="664.2" rx="3.1" ry="3.1" stroke="#888" stroke-width="1.1" fill="#eee"/>
<ellipse cx="52.6" cy="641.5" rx="2.0" ry="1.9" stroke="#888" stroke-width="1.1" fill="#eee"/>
<ellipse cx="43.6" cy="629.3" rx="2.9" ry="2.4" stroke="#888" stroke-width="1.1" fill="#eee"/>
<ellipse cx="25.3" cy="641.6" rx="1.9" ry="1.4" stroke="#888" stroke-width="1.1" fill="#eee"/>
<ellipse cx="20.7" cy="642.4" rx="3.5" ry="2.6" stroke="#888" stroke-width="1.1" fill="#eee"/>
<ellipse cx="54.2" cy="636.5" rx="2.3" ry="2.2" stroke="#888" stroke-width="1.1" fill="#eee"/>
<ellipse cx="9.4" cy="647.4" rx="2.3" ry="2.3" stroke="#888" stroke-width="1.1" fill="#eee"/>
<ellipse cx="16.5" cy="642.9" rx="3.4" ry="2.4" stroke="#888" stroke-width="1.1" fill="#eee"/>
<ellipse cx="27.1" cy="661.3" rx="3.1" ry="2.2" stroke="#888" stroke-width="1.1" fill="#eee"/>
<ellipse cx="8.7" cy="630.6" rx="3.4" ry="2.7" stroke="#888" stroke-width="1.1" fill="#eee"/>
<ellipse cx="43.6" cy="664.8" rx="2.3" ry="1.8" stroke="#888" stroke-width="1.1" fill="#eee"/>
<ellipse cx="19.8" cy="657.4" rx="2.2" ry="1.7" stroke="#888" stroke-width="1.1" fill="#eee"/>
<ellipse cx="7.2" cy="659.0" rx="3.4" ry="3.1" stroke="#888" stroke-width="1.1" fill="#eee"/>
<ellipse cx="53.2" cy="629.0" rx="2.1" ry="1.7" stroke="#888" stroke-width="1.1" fill="#eee"/>
<ellipse cx="53.9" cy="667.1" rx="2.4" ry="1.8" stroke="#888" stroke-width="1.1" fill="#eee"/>
<ellipse cx="28.1" cy="648.2" rx="3.5" ry="2.6" stroke="#888" stroke-width="1.1" fill="#eee"/>
<ellipse cx="46.3" cy="658.3" rx="3.2" ry="3.0" stroke="#888" stroke-width="1.1" fill="#eee"/>
<ellipse cx="36.8" cy="641.4" rx="2.2" ry="1.8" stroke="#888" stroke-width="1.1" fill="#eee"/>
<ellipse cx="45.3" cy="631.2" rx="2.0" ry="1.8" stroke="#888" stroke-width="1.1" fill="#eee"/>
<ellipse cx="19.1" cy="630.7" rx="1.7" ry="1.4" stroke="#888" stroke-width="1.1" fill="#eee"/>
<ellipse cx="23.0" cy="668.2" rx="3.4" ry="3.4" stroke="#888" stroke-width="1.1" fill="#eee"/>
<ellipse cx="20.0" cy="631.4" rx="1.8" ry="1.5" stroke="#888" stroke-width="1.1" fill="#eee"/>
<ellipse cx="41.8" cy="646.3" rx="2.1" ry="1.7" stroke="#888" stroke-width="1.1" fill="#eee"/>
<ellipse cx="37.4" cy="655.6" rx="3.1" ry="3.0" stroke="#888" stroke-width="1.1" fill="#eee"/>
<ellipse cx="39.6" cy="633.0" rx="3.3" ry="2.6" stroke="#888" stroke-width="1.1" fill="#eee"/>
<ellipse cx="34.8" cy="643.3" rx="3.1" ry="2.3" stroke="#888" stroke-width="1.1" fill="#eee"/>
<ellipse cx="19.1" cy="638.1" rx="1.9" ry="1.8" stroke="#888" stroke-width="1.1" fill="#eee"/>
<ellipse cx="35.3" cy="641.4" rx="2.4" ry="2.4" stroke="#888" stroke-width="1.1" fill="#eee"/>
<ellipse cx="31.9" cy="637.5" rx="3.2" ry="2.9" stroke="#888" stroke-width="1.1" fill="#eee"/>
<ellipse cx="55.6" cy="632.2" rx="2.5" ry="2.4" stroke="#888" stroke-width="1.1" fill="#eee"/>
<ellipse cx="48.2" cy="665.5" rx="1.7" ry="1.3" stroke="#888" stroke-width="1.1" fill="#eee"/>
<ellipse cx="12.8" cy="635.8" rx="3.5" ry="3.1" stroke="#888" stroke-width="1.1" fill="#eee"/>
<ellipse cx="19.7" cy="659.9" rx="3.5" ry="2.6" stroke="#888" stroke-width="1.1" fill="#eee"/>
<ellipse cx="36.2" cy="653.4" rx="2.0" ry="1.6" stroke="#888" stroke-width="1.1" fill="#eee"/>
<ellipse cx="13.9" cy="636.4" rx="2.1" ry="1.9" stroke="#888" stroke-width="1.1" fill="#eee"/>
<ellipse cx="38.9" cy="636.3" rx="1.6" ry="1.3" stroke="#888" stroke-width="1.1" fill="#eee"/>
<ellipse cx="40.2" cy="635.6" rx="2.2" ry="1.7" stroke="#888" stroke-width="1.1" fill="#eee"/>
<ellipse cx="10.1" cy="632.2" rx="2.4" ry="2.1" stroke="#888" stroke-width="1.1" fill="#eee"/>
<ellipse cx="38.3" cy="631.7" rx="1.9" ry="1.8" stroke="#888" stroke-width="1.1" fill="#eee"/>
<ellipse cx="27.1" cy="639.6" rx="2.2" ry="2.2" stroke="#888" stroke-width="1.1" fill="#eee"/>
<ellipse cx="22.3" cy="651.2" rx="2.3" ry="1.9" stroke="#888" stroke-width="1.1" fill="#eee"/>
<ellipse cx="49.3" cy="668.9" rx="2.3" ry="1.8" stroke="#888" stroke-width="1.1" fill="#eee"/>
<ellipse cx="42.7" cy="636.4" rx="1.6" ry="1.6" stroke="#888" stroke-width="1.1" fill="#eee"/>
<ellipse cx="27.8" cy="661.6" rx="2.4" ry="2.3" stroke="#888" stroke-width="1.1" fill="#eee"/>
<ellipse cx="29.6" cy="634.7" rx="1.6" ry="1.4" stroke="#888" stroke-width="1.1" fill="#eee"/>
<ellipse cx="38.4" cy="665.3" rx="1.8" ry="1.6" stroke="#888" stroke-width="1.1" fill="#eee"/>
<ellipse cx="25.2" cy="648.7" rx="1.9" ry="1.5" stroke="#888" stroke-width="1.1" fill="#eee"/>
<ellipse cx="32.5" cy="665.9" rx="1.8" ry="1.5" stroke="#888" stroke-width="1.1" fill="#eee"/>
<ellipse cx="46.4" cy="667.6" rx="2.0" ry="1.5" stroke="#888" stroke-width="1.1" fill="#eee"/>
<ellipse cx="53.2" cy="668.0" rx="2.6" ry="1.8" stroke="#888" stroke-width="1.1" fill="#eee"/>
<ellipse cx="47.4" cy="634.6" rx="3.2" ry="2.4" stroke="#888" stroke-width="1.1" fill="#eee"/>
<ellipse cx="26.8" cy="662.7" rx="3.3" ry="2.5" stroke="#888" stroke-width="1.1" fill="#eee"/>
<ellipse cx="17.7" cy="644.4" rx="2.6" ry="2.1" stroke="#888" stroke-width="1.1" fill="#eee"/>
<ellipse cx="13.0" cy="638.1" rx="3.0" ry="3.0" stroke="#888" stroke-width="1.1" fill="#eee"/>
<ellipse cx="9.0" cy="651.1" rx="3.1" ry="2.2" stroke="#888" stroke-width="1.1" fill="#eee"/>
<ellipse cx="48.1" cy="632.8" rx="2.8" ry="2.4" stroke="#888" stroke-width="1.1" fill="#eee"/>
<ellipse cx="37.7" cy="640.6" rx="2.4" ry="2.1" stroke="#888" stroke-width="1.1" fill="#eee"/>
<ellipse cx="27.9" cy="655.0" rx="2.5" ry="2.1" stroke="#888" stroke-width="1.1" fill="#eee"/>
<ellipse cx="8.1" cy="653.4" rx="2.6" ry="2.0" stroke="#888" stroke-width="1.1" fill="#eee"/>
<ellipse cx="44.4" cy="660.0" rx="2.5" ry="1.9" stroke="#888" stroke-width="1.1" fill="#eee"/>
<ellipse cx="30.2" cy="632.4" rx="1.9" ry="1.5" stroke="#888" stroke-width="1.1" fill="#eee"/>
<ellipse cx="11.5" cy="646.1" rx="2.6" ry="1.9" stroke="#888" stroke-width="1.1" fill="#eee"/>
<ellipse cx="38.2" cy="631.4" rx="3.1" ry="2.9" stroke="#888" stroke-width="1.1" fill="#eee"/>
<ellipse cx="32.1" cy="630.2" rx="2.6" ry="2.1" stroke="#888" stroke-width="1.1" fill="#eee"/>
<ellipse cx="53.6" cy="633.6" rx="3.3" ry="3.3" stroke="#888" stroke-width="1.1" fill="#eee"/>
<ellipse cx="42.9" cy="661.4" rx="2.0" ry="2.0" stroke="#888" stroke-width="1.1" fill="#eee"/>
<ellipse cx="31.1" cy="667.2" rx="3.4" ry="2.6" stroke="#888" stroke-width="1.1" fill="#eee"/>
<ellipse cx="45.6" cy="666.2" rx="1.7" ry="1.4" stroke="#888" stroke-width="1.1" fill="#eee"/>
<ellipse cx="44.1" cy="634.5" rx="3.4" ry="2.7" stroke="#888" stroke-width="1.1" fill="#eee"/>
<ellipse cx="47.0" cy="633.9" rx="2.6" ry="2.5" stroke="#888" stroke-width="1.1" fill="#eee"/>
<ellipse cx="17.2" cy="638.8" rx="2.6" ry="2.1" stroke="#888" stroke-width="1.1" fill="#eee"/>
<ellipse cx="8.8" cy="635.5" rx="1.9" ry="1.9" stroke="#888" stroke-width="1.1" fill="#eee"/>
<ellipse cx="40.3" cy="664.7" rx="1.9" ry="1.8" stroke="#888" stroke-width="1.1" fill="#eee"/>
<ellipse cx="12.6" cy="649.8" rx="2.9" ry="2.3" stroke="#888" stroke-width="1.1" fill="#eee"/>
<ellipse cx="35.4" cy="664.2" rx="1.8" ry="1.8" stroke="#888" stroke-width="1.1" fill="#eee"/>
<ellipse cx="37.9" cy="644.2" rx="3.2" ry="2.5" stroke="#888" stroke-width="1.1" fill="#eee"/>
<ellipse cx="24.7" cy="659.4" rx="2.5" ry="1.9" stroke="#888" stroke-width="1.1" fill="#eee"/>
<ellipse cx="43.4" cy="630.0" rx="3.2" ry="2.5" stroke="#888" stroke-width="1.1" fill="#eee"/>
<ellipse cx="38.3" cy="668.3" rx="2.8" ry="2.5" stroke="#888" stroke-width="1.1" fill="#eee"/>
<ellipse cx="22.3" cy="628.1" rx="1.7" ry="1.2" stroke="#888" stroke-width="1.1" fill="#eee"/>
<ellipse cx="37.2" cy="645.7" rx="2.6" ry="2.5" stroke="#888" stroke-width="1.1" fill="#eee"/>
<ellipse cx="13.5" cy="637.3" rx="2.9" ry="2.1" stroke="#888" stroke-width="1.1" fill="#eee"/>
<ellipse cx="7.1" cy="642.6" rx="1.8" ry="1.5" stroke="#888" stroke-width="1.1" fill="#eee"/>
<ellipse cx="18.0" cy="651.9" rx="2.8" ry="2.1" stroke="#888" stroke-width="1.1" fill="#eee"/>
<ellipse cx="37.6" cy="647.5" rx="1.9" ry="1.8" stroke="#888" stroke-width="1.1" fill="#eee"/>
<ellipse cx="18.9" cy="634.1" rx="1.8" ry="1.6" stroke="#888" stroke-width="1.1" fill="#eee"/>
<ellipse cx="49.7" cy="660.1" rx="2.4" ry="1.9" stroke="#888" stroke-width="1.1" fill="#eee"/>
<ellipse cx="7.6" cy="654.4" rx="2.7" ry="2.2" stroke="#888" stroke-width="1.1" fill="#eee"/>
<ellipse cx="38.6" cy="646.2" rx="3.5" ry="3.2" stroke="#888" stroke-width="1.1" fill="#eee"/>
<ellipse cx="19.2" cy="665.0" rx="1.7" ry="1.5" stroke="#888" stroke-width="1.1" fill="#eee"/>
<ellipse cx="26.9" cy="637.7" rx="1.7" ry="1.6" stroke="#888" stroke-width="1.1" fill="#eee"/>
<ellipse cx="7.6" cy="650.6" rx="3.5" ry="2.6" stroke="#888" stroke-width="1.1" fill="#eee"/>
<ellipse cx="16.8" cy="652.9" rx="2.6" ry="2.3" stroke="#888" stroke-width="1.1" fill="#eee"/>
<ellipse cx="46.9" cy="635.2" rx="2.2" ry="1.8" stroke="#888" stroke-width="1.1" fill="#eee"/>
<ellipse cx="9.4" cy="664.5" rx="3.2" ry="2.9" stroke="#888" stroke-width="1.1" fill="#eee"/>
<ellipse cx="7.3" cy="662.6" rx="3.1" ry="2.6" stroke="#888" stroke-width="1.1" fill="#eee"/>
<ellipse cx="18.1" cy="632.3" rx="2.1" ry="1.5" stroke="#888" stroke-width="1.1" fill="#eee"/>
<ellipse cx="23.4" cy="658.7" rx="3.0" ry="2.9" stroke="#888" stroke-width="1.1" fill="#eee"/>
<ellipse cx="41.9" cy="638.9" rx="2.7" ry="2.2" stroke="#888" stroke-width="1.1" fill="#eee"/>
<ellipse cx="20.0" cy="654.3" rx="3.5" ry="2.7" stroke="#888" stroke-width="1.1" fill="#eee"/>
<ellipse cx="50.1" cy="628.6" rx="2.1" ry="1.6" stroke="#888" stroke-width="1.1" fill="#eee"/>
<ellipse cx="43.5" cy="666.7" rx="3.1" ry="2.5" stroke="#888" stroke-width="1.1" fill="#eee"/>
<ellipse cx="50.1" cy="641.5" rx="2.1" ry="2.0" stroke="#888" stroke-width="1.1" fill="#eee"/>
<ellipse cx="37.9" cy="656.4" rx="2.9" ry="2.9" stroke="#888" stroke-width="1.1" fill="#eee"/>
<ellipse cx="30.0" cy="662.4" rx="3.0" ry="2.9" stroke="#888" stroke-width="1.1" fill="#eee"/>
<ellipse cx="28.4" cy="657.7" rx="2.7" ry="2.2" stroke="#888" stroke-width="1.1" fill="#eee"/>
<ellipse cx="17.4" cy="653.5" rx="1.8" ry="1.7" stroke="#888" stroke-width="1.1" fill="#eee"/>
<ellipse cx="14.1" cy="629.1" rx="1.8" ry="1.8" stroke="#888" stroke-width="1.1" fill="#eee"/>
<ellipse cx="23.9" cy="633.8" rx="1.7" ry="1.2" stroke="#888" stroke-width="1.1" fill="#eee"/>
<ellipse cx="40.9" cy="654.0" rx="3.0" ry="2.8" stroke="#888" stroke-width="1.1" fill="#eee"/>
<ellipse cx="10.2" cy="652.2" rx="2.3" ry="2.2" stroke="#888" stroke-width="1.1" fill="#eee"/>
<ellipse cx="47.2" cy="664.5" rx="1.7" ry="1.7" stroke="#888" stroke-width="1.1" fill="#eee"/>
<ellipse cx="51.8" cy="666.7" rx="1.8" ry="1.4" stroke="#888" stroke-width="1.1" fill="#eee"/>
<ellipse cx="12.5" cy="629.4" rx="3.3" ry="3.1" stroke="#888" stroke-width="1.1" fill="#eee"/>
<ellipse cx="38.1" cy="661.8" rx="2.9" ry="2.3" stroke="#888" stroke-width="1.1" fill="#eee"/>
<ellipse cx="11.9" cy="632.0" rx="3.1" ry="2.4" stroke="#888" stroke-width="1.1" fill="#eee"/>
<ellipse cx="22.6" cy="645.4" rx="1.6" ry="1.3" stroke="#888" stroke-width="1.1" fill="#eee"/>
<ellipse cx="20.8" cy="657.3" rx="2.3" ry="1.9" stroke="#888" stroke-width="1.1" fill="#eee"/>
<ellipse cx="8.5" cy="644.9" rx="2.5" ry="2.3" stroke="#888" stroke-width="1.1" fill="#eee"/>
<ellipse cx="24.0" cy="656.9" rx="2.7" ry="2.0" stroke="#888" stroke-width="1.1" fill="#eee"/>
<ellipse cx="49.2" cy="631.7" rx="3.2" ry="2.4" stroke="#888" stroke-width="1.1" fill="#eee"/>
<ellipse cx="7.1" cy="636.3" rx="3.1" ry="3.1" stroke="#888" stroke-width="1.1" fill="#eee"/>
<ellipse cx="7.2" cy="648.1" rx="2.6" ry="2.4" stroke="#888" stroke-width="1.1" fill="#eee"/>
<ellipse cx="16.0" cy="648.3" rx="2.3" ry="2.2" stroke="#888" stroke-width="1.1" fill="#eee"/>
<rect x="67.5" y="642.5" width="13.5" height="12" rx="2.5" stroke="#9a9a9a" stroke-width="1.3"/>
<rect x="86" y="642.5" width="13.5" height="12" rx="2.5" stroke="#9a9a9a" stroke-width="1.3"/>
<rect x="104.5" y="642.5" width="13.5" height="12" rx="2.5" stroke="#9a9a9a" stroke-width="1.3"/>
<path d="M81 648.5 H86 M99.5 648.5 H104.5" stroke="#9a9a9a" stroke-width="1.4"/><circle cx="74" cy="648.5" r="2.2" stroke="#9a9a9a"/><path d="M92.7 643 V654 M111.2 643 V654" stroke="#9a9a9a"/><circle cx="89.5" cy="648.5" r="1.5" stroke="#9a9a9a" stroke-width="0.8"/><circle cx="96" cy="648.5" r="1.5" stroke="#9a9a9a" stroke-width="0.8"/><circle cx="108" cy="648.5" r="1.5" stroke="#9a9a9a" stroke-width="0.8"/><circle cx="114.5" cy="648.5" r="1.5" stroke="#9a9a9a" stroke-width="0.8"/>
<circle cx="154" cy="648.5" r="23.3" stroke="#999" stroke-width="1.3"/><circle cx="154" cy="648.5" r="21.3" stroke="#a8a8a8" stroke-width="0.9"/><ellipse cx="143.3" cy="648.5" rx="10.8" ry="20.2" stroke="#999" stroke-width="1.1"/><ellipse cx="164.7" cy="648.5" rx="10.8" ry="20.2" stroke="#999" stroke-width="1.1"/><ellipse cx="137" cy="648.5" rx="1.3" ry="3.2" stroke="#999" stroke-width="0.9"/><ellipse cx="171" cy="648.5" rx="1.3" ry="3.2" stroke="#999" stroke-width="0.9"/>
<g transform="rotate(-17 209 648)"><ellipse cx="209" cy="648" rx="20" ry="10.5" stroke="#7a7a7a" stroke-width="1.4" fill="#dedede"/><ellipse cx="209" cy="648" rx="15.5" ry="6.8" stroke="#7a7a7a" stroke-width="1.5" fill="#cfcfcf"/>
<path d="M207.7 658.5l-0.1 2.2 M227.8 644.4l2.1 -0.8 M204.8 658.3l-0.5 2.2 M213.4 658.2l0.5 2.1 M202.8 638.0l-0.7 -2.1 M189.0 648.1l-2.2 0.0 M224.4 654.7l1.7 1.4 M195.9 640.1l-1.4 -1.7 M226.5 653.1l1.9 1.1 M213.7 637.8l0.5 -2.1 M202.5 638.1l-0.7 -2.1 M213.6 637.8l0.5 -2.1 M195.1 640.4l-1.5 -1.6 M196.7 656.3l-1.4 1.7 M192.7 654.1l-1.8 1.3 M193.2 654.5l-1.7 1.4 M224.4 641.3l1.7 -1.4 M226.1 653.4l1.9 1.1 M224.3 641.2l1.7 -1.4 M228.8 649.7l2.2 0.3 M214.4 658.1l0.6 2.1 M207.3 658.5l-0.2 2.2 M225.3 641.9l1.8 -1.3 M189.0 647.9l-2.2 -0.0 M194.5 655.2l-1.6 1.5 M223.9 641.0l1.6 -1.5 M211.1 658.4l0.2 2.2 M189.6 650.6l-2.1 0.5 M189.4 645.9l-2.2 -0.4 M209.6 637.5l0.1 -2.2 M209.4 637.5l0.0 -2.2 M196.9 639.7l-1.3 -1.7 M197.4 656.6l-1.3 1.8 M199.7 657.3l-1.0 1.9 M220.2 656.7l1.2 1.8 M220.0 639.2l1.2 -1.8 M198.5 639.1l-1.2 -1.9 M208.0 637.5l-0.1 -2.2 M218.7 657.2l1.1 1.9 M190.5 651.9l-2.0 0.8 M211.9 637.6l0.3 -2.2 M191.4 643.0l-1.9 -1.0 M223.0 655.5l1.5 1.6 M189.6 650.5l-2.1 0.5 M224.0 641.1l1.7 -1.5 M210.5 658.5l0.2 2.2 M216.2 657.8l0.8 2.1 M202.6 658.0l-0.7 2.1 M203.2 638.0l-0.6 -2.1 M220.1 639.3l1.2 -1.8 M220.3 656.7l1.2 1.8 M220.1 656.7l1.2 1.8 M209.3 658.5l0.0 2.2 M199.7 657.3l-1.0 2.0 M189.2 646.5l-2.2 -0.3 M219.6 656.9l1.2 1.9 M199.6 657.3l-1.0 1.9 M216.4 657.7l0.8 2.0 M228.8 646.4l2.2 -0.3 M206.3 637.6l-0.3 -2.2 M199.4 651.7l-1.6 -0.5 M220.6 650.4l0.9 -0.3 M201.7 649.1l-1.6 -1.2 M206.3 644.3l-0.4 1.2 M213.6 648.0l0.5 -0.1 M200.4 648.8l-0.4 1.0 M218.8 647.4l0.3 1.0 M207.1 645.8l0.9 1.5 M215.6 649.6l1.4 0.7 M212.4 647.6l-0.7 0.5 M199.3 647.4l1.1 0.9 M212.1 646.0l-0.3 -0.2 M211.9 647.3l0.7 1.7 M201.4 649.2l1.1 -0.4 M208.8 651.8l-1.8 0.2 M200.9 650.3l1.8 0.1 M199.4 648.6l0.2 0.9 M209.3 649.1l1.3 0.1 M206.8 651.6l-1.2 0.7 M206.4 650.1l-1.5 1.9 M205.5 644.5l-0.9 -0.4 M197.3 647.3l-0.3 0.8 M205.5 646.1l-1.1 1.0 M219.6 648.2l-1.1 1.2 M206.4 645.7l-1.5 1.1 M216.4 649.1l-0.1 0.2 M202.4 651.7l-0.6 0.6 M216.6 650.5l-0.1 -0.8 M210.2 645.0l1.3 -0.6 M217.4 646.1l-0.5 -1.0 M207.2 645.5l-2.0 0.9 M203.7 646.0l-0.8 -0.1 M207.3 649.1l0.6 -0.6 M219.3 650.8l-1.8 1.3 M218.7 650.3l-1.4 1.3 M212.2 644.1l-2.0 1.8 M212.7 646.0l-1.6 -1.4 M202.6 650.2l-0.6 -1.4 M218.7 650.3l-1.3 1.6 M211.6 650.3l0.7 1.6 M215.9 650.7l-1.2 0.8 M209.7 649.9l-0.2 1.5 M210.3 646.1l-1.1 -1.4 M208.8 644.5l-0.1 -1.4 M208.8 648.0l0.2 1.5 M197.2 650.7l-0.1 0.3 M213.0 650.7l-0.5 -0.3 M220.1 644.6l0.5 0.5 M197.7 648.9l0.7 1.7 M204.9 651.9l0.0 -0.1" stroke="#777" stroke-width="1.1"/></g>
<path d="M229 643 Q233 636 237 638 Q241 641 238 648 Q236 655 241 660" stroke="#9a9a9a" stroke-width="1.2"/>
<path d="M5.5 735 L22 729 L30 724 L45 725 L57.5 726 L56 741 L48 740 L40 738 L34 742 L26 743 L22 748 L12 751 L8 748 Z" fill="#858585" stroke="#858585" stroke-width="1"/>
<path d="M12 742 L24 738 M28 735 L40 731 M44 731 L52 730 M16 734 l3 -1 M36 727 l3 0" stroke="#efefef" stroke-width="1.3"/><path d="M22 741 v5 M36 731 v6 M55 728 v6" stroke="#f2f2f2" stroke-width="2.2"/>
<circle cx="92.5" cy="737.5" r="23.3" stroke="#999" stroke-width="1.4"/><circle cx="92.5" cy="737.5" r="21" stroke="#a4a4a4" stroke-width="1"/>
<circle cx="83" cy="728" r="8" stroke="#999" stroke-width="1" fill="#f5f5f5"/>
<circle cx="98" cy="726" r="8" stroke="#999" stroke-width="1" fill="#f5f5f5"/>
<circle cx="105" cy="738" r="8" stroke="#999" stroke-width="1" fill="#f5f5f5"/>
<circle cx="99" cy="750" r="8" stroke="#999" stroke-width="1" fill="#f5f5f5"/>
<circle cx="85" cy="751" r="8" stroke="#999" stroke-width="1" fill="#f5f5f5"/>
<circle cx="79" cy="741" r="7.5" stroke="#999" stroke-width="1" fill="#f5f5f5"/>
<circle cx="88" cy="739" r="8.3" stroke="#999" stroke-width="1" fill="#f5f5f5"/>
<ellipse cx="163.5" cy="724.5" rx="1.8" ry="3.6" transform="rotate(25 163.5 724.5)" stroke="#999" stroke-width="1.1"/><path d="M162 728 Q157 733 158.5 738 Q159 742 153 744 Q150 746 149.5 749 Q146 750 144 753 L141.5 755" stroke="#999" stroke-width="1.3"/>
<circle cx="213.5" cy="737" r="12.3" stroke="#8e8e8e" stroke-width="1.4"/><circle cx="213.5" cy="737" r="9.8" stroke="#9a9a9a" stroke-width="1.1"/>
<path d="M220.8 724.4 Q223.4 723.0 223.4 719.9 Q223.3 716.8 226.0 715.3" stroke="#8e8e8e" stroke-width="1.3"/>
<path d="M227.5 733.2 Q230.5 734.1 232.6 731.9 Q234.7 729.7 237.6 730.5" stroke="#8e8e8e" stroke-width="1.3"/>
<path d="M226.6 743.1 Q228.3 745.7 231.4 745.3 Q234.5 745.0 236.2 747.6" stroke="#8e8e8e" stroke-width="1.3"/>
<path d="M219.6 750.1 Q219.3 753.2 221.8 754.9 Q224.4 756.6 224.1 759.7" stroke="#8e8e8e" stroke-width="1.3"/>
<path d="M207.4 750.1 Q204.8 751.8 205.2 754.9 Q205.5 758.0 202.9 759.7" stroke="#8e8e8e" stroke-width="1.3"/>
<path d="M199.9 742.0 Q196.9 741.4 194.9 743.8 Q193.0 746.2 190.0 745.6" stroke="#8e8e8e" stroke-width="1.3"/>
<path d="M200.4 730.9 Q198.7 728.3 195.6 728.7 Q192.5 729.0 190.8 726.4" stroke="#8e8e8e" stroke-width="1.3"/>
<path d="M207.4 723.9 Q207.7 720.8 205.2 719.1 Q202.6 717.4 202.9 714.3" stroke="#8e8e8e" stroke-width="1.3"/>
<g stroke="none"><ellipse cx="31.5" cy="828.5" rx="23.5" ry="23" fill="#b81a10"/><ellipse cx="28" cy="826.5" rx="19.5" ry="20.5" fill="#f9d6b8"/><path d="M12 836 Q20 850 36 849 Q26 852 16 845 Z" fill="#c83024"/><ellipse cx="30" cy="838" rx="10" ry="9.5" fill="#9ab4d6"/><ellipse cx="31" cy="820" rx="9.5" ry="8" fill="#f6c396"/><path d="M22 825 q9 5 18 0 q-9 1 -18 0z" fill="#a8d8c0"/><ellipse cx="27" cy="809" rx="6" ry="3.5" fill="#a8bcd8"/><path d="M10 826 l8 2 l-7 3z M42 838 l5 -3 l-1 6z M40 812 l6 3 l-5 2z" fill="#c4261a"/><ellipse cx="15" cy="834" rx="4" ry="5" fill="#f6b8ac"/></g>
<path d="M35.6 832.4l0.9 0.5 M27.7 843.2l-0.5 -0.1 M30.4 842.0l-1.2 -0.3 M28.9 839.2l1.3 -0.8 M34.6 837.2l0.0 -0.9 M30.1 844.7l0.6 1.2 M27.6 836.1l-0.8 0.3 M31.9 842.2l-1.8 0.9 M35.4 839.1l-1.8 -0.8 M23.1 834.5l1.7 0.4 M32.2 842.3l1.6 0.4 M31.6 840.1l0.8 0.4 M32.5 834.8l0.7 -0.2 M33.7 833.3l-1.3 -1.9" stroke="#d8c8a0" stroke-width="1"/>
<path d="M71 804 L77 807 L81 806 L84 812 L85 820 L86 827 L90 830 L95 829" stroke="#aaa" stroke-width="1.8"/><path d="M90 830 L88 838 M95 829 L99 836 L95 842 M104 843 L98 853 M104 845 L112 849" stroke="#a2a2a2" stroke-width="2"/>
<path d="M100.6 825.9l-1.0 1.9 M90.9 823.6l-1.7 1.4 M95.5 809.5l1.3 1.8 M92.1 811.0l0.5 2.1 M97.4 826.3l2.2 0.4 M95.6 804.0l2.0 0.8 M101.4 817.4l-2.1 0.6 M92.7 803.4l0.8 2.1 M96.2 826.4l-2.2 0.1 M93.4 813.3l2.1 0.7 M97.5 808.3l2.0 1.0 M82.4 803.1l-1.2 1.8 M84.9 827.2l2.1 0.6 M102.9 806.2l2.2 0.1 M99.3 809.1l-1.5 1.6 M86.5 804.3l-1.7 1.4" stroke="#aaa" stroke-width="1.4"/>
<circle cx="151" cy="833" r="19.5" stroke="#8a8a8a" stroke-width="1.8" fill="#ececec"/><circle cx="151" cy="833" r="16.8" stroke="#9a9a9a" stroke-width="0.9"/>
<path d="M158.3 845.1h0.1 M155.4 840.1h0.1 M149.7 847.7h0.1 M144.6 840.8h0.1 M150.5 818.0h0.1 M146.5 835.5h0.1 M148.9 839.0h0.1 M138.9 843.1h0.1 M146.4 837.9h0.1 M155.4 830.2h0.1 M147.1 842.7h0.1 M153.3 825.9h0.1 M157.9 844.1h0.1 M145.3 836.6h0.1 M154.4 826.5h0.1 M148.6 846.2h0.1 M146.8 839.3h0.1 M154.5 846.5h0.1 M161.5 825.6h0.1 M148.4 835.9h0.1 M153.4 825.3h0.1 M162.9 843.4h0.1 M157.3 847.1h0.1 M145.8 818.9h0.1 M152.8 843.1h0.1 M140.8 841.5h0.1 M154.6 839.0h0.1 M149.8 823.0h0.1 M142.7 841.5h0.1 M160.9 831.6h0.1 M160.3 823.9h0.1 M153.7 846.5h0.1 M164.1 833.7h0.1 M150.2 836.0h0.1 M140.4 822.5h0.1 M140.1 839.8h0.1 M146.3 835.2h0.1 M147.7 833.6h0.1 M137.6 837.5h0.1 M160.8 821.3h0.1 M154.3 827.7h0.1 M163.4 832.5h0.1 M153.3 824.9h0.1 M160.5 830.5h0.1 M140.8 822.1h0.1 M153.0 845.6h0.1 M149.6 848.2h0.1 M154.3 829.5h0.1 M142.7 835.2h0.1 M156.8 829.4h0.1 M149.2 821.4h0.1 M142.7 828.0h0.1 M160.7 840.1h0.1 M157.0 826.2h0.1 M154.1 841.8h0.1 M137.6 827.0h0.1 M142.7 820.2h0.1 M150.4 821.7h0.1 M142.1 820.9h0.1 M158.4 822.6h0.1 M138.8 831.2h0.1 M162.6 837.4h0.1 M149.4 827.6h0.1 M162.0 832.2h0.1 M155.4 820.9h0.1 M158.3 834.8h0.1 M143.1 830.0h0.1 M139.3 825.2h0.1 M162.5 827.4h0.1 M139.7 832.7h0.1 M144.8 846.7h0.1 M156.7 823.2h0.1 M150.2 825.7h0.1 M142.8 822.9h0.1 M137.3 825.8h0.1 M158.7 826.0h0.1 M161.4 827.6h0.1 M162.3 833.9h0.1 M140.3 830.8h0.1 M153.4 820.7h0.1 M140.1 842.2h0.1 M158.2 822.7h0.1 M154.7 832.8h0.1 M143.3 823.0h0.1 M154.8 840.1h0.1 M161.6 835.8h0.1 M158.9 829.9h0.1 M161.6 827.4h0.1 M164.9 832.2h0.1 M163.6 825.1h0.1 M140.3 844.3h0.1 M146.5 821.6h0.1 M146.6 836.2h0.1 M149.2 833.5h0.1 M138.1 840.3h0.1 M144.9 840.2h0.1 M147.0 841.5h0.1 M166.4 832.8h0.1 M151.5 834.0h0.1 M142.5 843.8h0.1 M157.8 822.6h0.1 M153.6 833.8h0.1 M157.9 819.5h0.1 M163.6 840.4h0.1 M150.8 833.0h0.1 M143.5 820.1h0.1 M147.8 820.7h0.1 M154.1 845.3h0.1 M139.0 835.5h0.1 M159.4 821.6h0.1 M147.2 830.3h0.1 M162.6 833.9h0.1 M147.5 848.0h0.1 M160.4 827.5h0.1 M142.2 827.4h0.1 M161.7 844.8h0.1 M135.8 833.6h0.1 M142.5 830.4h0.1 M155.5 828.4h0.1 M152.0 818.4h0.1" stroke="#222" stroke-width="1"/>
<path d="M149.4 833.6l-2.4 -1.8 M162.3 840.4l2.2 0.7 M158.4 843.1l1.9 -2.3 M154.4 827.6l0.9 -1.1 M152.0 844.1l0.6 -1.2 M151.5 831.8l2.3 -1.1 M146.3 837.2l-1.9 0.5 M161.9 833.8l-1.2 -0.2 M151.8 824.7l-1.9 -1.8 M146.0 831.2l-1.1 -1.3 M141.1 834.7l1.7 0.5 M152.7 837.3l-1.5 1.1 M150.1 834.7l0.6 -0.2 M146.5 827.1l-1.4 0.1 M148.2 835.6l-2.4 -0.7 M159.7 827.0l0.3 -0.0 M145.8 845.7l-1.0 1.4 M142.8 822.7l1.9 -0.3 M140.5 830.7l-0.3 1.2 M141.6 826.6l2.3 1.2 M142.7 829.4l-0.7 0.9 M153.8 842.2l1.6 0.1 M156.7 839.6l1.3 -0.1 M157.8 838.7l2.1 -1.9 M159.9 821.1l1.3 0.4 M150.9 845.1l0.4 -0.4 M157.8 842.8l0.5 -0.6 M149.9 832.4l1.1 -1.0 M148.4 834.9l-0.6 -0.9 M157.9 842.2l-0.0 -0.3 M143.4 828.6l-1.8 0.4 M153.0 823.2l2.1 -0.9 M159.2 842.0l2.3 -1.5 M149.2 843.8l-2.4 -2.3 M152.6 833.4l2.1 1.4 M151.9 846.0l0.1 0.1 M155.4 830.7l-0.7 0.5 M147.4 844.7l0.9 0.1 M141.4 830.4l-0.5 0.3 M152.8 843.0l2.3 -0.1 M149.6 836.6l2.5 -0.8 M151.7 841.4l-1.6 -0.9 M162.5 841.7l0.1 -1.9 M160.5 838.2l1.6 2.5 M160.3 831.5l-1.7 -1.1 M151.3 833.6l-1.6 -1.6 M154.1 836.1l-0.7 2.5 M154.3 822.1l-0.4 1.4 M146.4 838.3l-2.5 -1.0 M159.2 835.7l0.8 -1.5" stroke="#8a8a8a" stroke-width="1"/>
<path d="M139.8 817.0 L136.1 811.7" stroke="#8e8e8e" stroke-width="1.3"/><circle cx="136.1" cy="811.7" r="1.2" stroke="#8e8e8e" stroke-width="0.9"/>
<path d="M147.6 813.8 L146.5 807.4" stroke="#8e8e8e" stroke-width="1.3"/><circle cx="146.5" cy="807.4" r="1.2" stroke="#8e8e8e" stroke-width="0.9"/>
<path d="M156.0 814.2 L157.7 807.9" stroke="#8e8e8e" stroke-width="1.3"/><circle cx="157.7" cy="807.9" r="1.2" stroke="#8e8e8e" stroke-width="0.9"/>
<path d="M163.5 818.1 L167.7 813.1" stroke="#8e8e8e" stroke-width="1.3"/><circle cx="167.7" cy="813.1" r="1.2" stroke="#8e8e8e" stroke-width="0.9"/>
<path d="M168.7 824.8 L174.6 822.0" stroke="#8e8e8e" stroke-width="1.3"/><circle cx="174.6" cy="822.0" r="1.2" stroke="#8e8e8e" stroke-width="0.9"/>
<path d="M170.5 833.0 L177.0 833.0" stroke="#8e8e8e" stroke-width="1.3"/><circle cx="177.0" cy="833.0" r="1.2" stroke="#8e8e8e" stroke-width="0.9"/>
<path d="M168.7 841.2 L174.6 844.0" stroke="#8e8e8e" stroke-width="1.3"/><circle cx="174.6" cy="844.0" r="1.2" stroke="#8e8e8e" stroke-width="0.9"/>
<path d="M203.5 806 Q214.5 800 225.5 806 V850 Q214.5 856 203.5 850 Z" fill="#d2d2d2" stroke="#7a7a7a" stroke-width="1.2"/>
<path d="M203.5 808 Q214.5 812 225.5 808 M203.5 811 Q214.5 815 225.5 811 M203.5 814 Q214.5 818 225.5 814 M203.5 817 Q214.5 821 225.5 817 M203.5 820 Q214.5 824 225.5 820 M203.5 823 Q214.5 827 225.5 823 M203.5 826 Q214.5 830 225.5 826 M203.5 829 Q214.5 833 225.5 829 M203.5 832 Q214.5 836 225.5 832 M203.5 835 Q214.5 839 225.5 835 M203.5 838 Q214.5 842 225.5 838 M203.5 841 Q214.5 845 225.5 841 M203.5 844 Q214.5 848 225.5 844 M203.5 847 Q214.5 851 225.5 847 M203.5 850 Q214.5 854 225.5 850 M206 805 V853 M208.5 805 V853 M211 805 V853 M213.5 805 V853 M216 805 V853 M218.5 805 V853 M221 805 V853 M223.5 805 V853" stroke="#7a7a7a" stroke-width="0.9"/>
<path d="M209 806 l2 -3 l2 3 l2 -3 l2 3 l2 -3" stroke="#8a8a8a" stroke-width="0.9"/>
<path d="M32.0 897.0 L50.2 907.5 L50.2 928.5 L32.0 939.0 L13.8 928.5 L13.8 907.5 Z" stroke="#9a9a9a" stroke-width="1"/>
<circle cx="28.7" cy="900.8" r="1.35" stroke="#8a8a8a" stroke-width="0.9"/>
<circle cx="32.0" cy="900.8" r="1.35" stroke="#8a8a8a" stroke-width="0.9"/>
<circle cx="35.3" cy="900.8" r="1.35" stroke="#8a8a8a" stroke-width="0.9"/>
<circle cx="23.8" cy="903.7" r="1.35" stroke="#8a8a8a" stroke-width="0.9"/>
<circle cx="27.0" cy="903.7" r="1.35" stroke="#8a8a8a" stroke-width="0.9"/>
<circle cx="30.3" cy="903.7" r="1.35" stroke="#8a8a8a" stroke-width="0.9"/>
<circle cx="33.6" cy="903.7" r="1.35" stroke="#8a8a8a" stroke-width="0.9"/>
<circle cx="36.9" cy="903.7" r="1.35" stroke="#8a8a8a" stroke-width="0.9"/>
<circle cx="40.2" cy="903.7" r="1.35" stroke="#8a8a8a" stroke-width="0.9"/>
<circle cx="18.8" cy="906.6" r="1.35" stroke="#8a8a8a" stroke-width="0.9"/>
<circle cx="22.1" cy="906.6" r="1.35" stroke="#8a8a8a" stroke-width="0.9"/>
<circle cx="25.4" cy="906.6" r="1.35" stroke="#8a8a8a" stroke-width="0.9"/>
<circle cx="28.7" cy="906.6" r="1.35" stroke="#8a8a8a" stroke-width="0.9"/>
<circle cx="32.0" cy="906.6" r="1.35" stroke="#8a8a8a" stroke-width="0.9"/>
<circle cx="35.3" cy="906.6" r="1.35" stroke="#8a8a8a" stroke-width="0.9"/>
<circle cx="38.6" cy="906.6" r="1.35" stroke="#8a8a8a" stroke-width="0.9"/>
<circle cx="41.9" cy="906.6" r="1.35" stroke="#8a8a8a" stroke-width="0.9"/>
<circle cx="45.2" cy="906.6" r="1.35" stroke="#8a8a8a" stroke-width="0.9"/>
<circle cx="17.1" cy="909.4" r="1.35" stroke="#8a8a8a" stroke-width="0.9"/>
<circle cx="20.4" cy="909.4" r="1.35" stroke="#8a8a8a" stroke-width="0.9"/>
<circle cx="23.8" cy="909.4" r="1.35" stroke="#8a8a8a" stroke-width="0.9"/>
<circle cx="27.0" cy="909.4" r="1.35" stroke="#8a8a8a" stroke-width="0.9"/>
<circle cx="30.3" cy="909.4" r="1.35" stroke="#8a8a8a" stroke-width="0.9"/>
<circle cx="33.6" cy="909.4" r="1.35" stroke="#8a8a8a" stroke-width="0.9"/>
<circle cx="36.9" cy="909.4" r="1.35" stroke="#8a8a8a" stroke-width="0.9"/>
<circle cx="40.2" cy="909.4" r="1.35" stroke="#8a8a8a" stroke-width="0.9"/>
<circle cx="43.5" cy="909.4" r="1.35" stroke="#8a8a8a" stroke-width="0.9"/>
<circle cx="46.9" cy="909.4" r="1.35" stroke="#8a8a8a" stroke-width="0.9"/>
<circle cx="15.5" cy="912.3" r="1.35" stroke="#8a8a8a" stroke-width="0.9"/>
<circle cx="18.8" cy="912.3" r="1.35" stroke="#8a8a8a" stroke-width="0.9"/>
<circle cx="22.1" cy="912.3" r="1.35" stroke="#8a8a8a" stroke-width="0.9"/>
<circle cx="25.4" cy="912.3" r="1.35" stroke="#8a8a8a" stroke-width="0.9"/>
<circle cx="28.7" cy="912.3" r="1.35" stroke="#8a8a8a" stroke-width="0.9"/>
<circle cx="32.0" cy="912.3" r="1.35" stroke="#8a8a8a" stroke-width="0.9"/>
<circle cx="35.3" cy="912.3" r="1.35" stroke="#8a8a8a" stroke-width="0.9"/>
<circle cx="38.6" cy="912.3" r="1.35" stroke="#8a8a8a" stroke-width="0.9"/>
<circle cx="41.9" cy="912.3" r="1.35" stroke="#8a8a8a" stroke-width="0.9"/>
<circle cx="45.2" cy="912.3" r="1.35" stroke="#8a8a8a" stroke-width="0.9"/>
<circle cx="48.5" cy="912.3" r="1.35" stroke="#8a8a8a" stroke-width="0.9"/>
<circle cx="17.1" cy="915.1" r="1.35" stroke="#8a8a8a" stroke-width="0.9"/>
<circle cx="20.4" cy="915.1" r="1.35" stroke="#8a8a8a" stroke-width="0.9"/>
<circle cx="23.8" cy="915.1" r="1.35" stroke="#8a8a8a" stroke-width="0.9"/>
<circle cx="27.0" cy="915.1" r="1.35" stroke="#8a8a8a" stroke-width="0.9"/>
<circle cx="30.3" cy="915.1" r="1.35" stroke="#8a8a8a" stroke-width="0.9"/>
<circle cx="33.6" cy="915.1" r="1.35" stroke="#8a8a8a" stroke-width="0.9"/>
<circle cx="36.9" cy="915.1" r="1.35" stroke="#8a8a8a" stroke-width="0.9"/>
<circle cx="40.2" cy="915.1" r="1.35" stroke="#8a8a8a" stroke-width="0.9"/>
<circle cx="43.5" cy="915.1" r="1.35" stroke="#8a8a8a" stroke-width="0.9"/>
<circle cx="46.9" cy="915.1" r="1.35" stroke="#8a8a8a" stroke-width="0.9"/>
<circle cx="15.5" cy="918.0" r="1.35" stroke="#8a8a8a" stroke-width="0.9"/>
<circle cx="18.8" cy="918.0" r="1.35" stroke="#8a8a8a" stroke-width="0.9"/>
<circle cx="22.1" cy="918.0" r="1.35" stroke="#8a8a8a" stroke-width="0.9"/>
<circle cx="25.4" cy="918.0" r="1.35" stroke="#8a8a8a" stroke-width="0.9"/>
<circle cx="28.7" cy="918.0" r="1.35" stroke="#8a8a8a" stroke-width="0.9"/>
<circle cx="32.0" cy="918.0" r="1.35" stroke="#8a8a8a" stroke-width="0.9"/>
<circle cx="35.3" cy="918.0" r="1.35" stroke="#8a8a8a" stroke-width="0.9"/>
<circle cx="38.6" cy="918.0" r="1.35" stroke="#8a8a8a" stroke-width="0.9"/>
<circle cx="41.9" cy="918.0" r="1.35" stroke="#8a8a8a" stroke-width="0.9"/>
<circle cx="45.2" cy="918.0" r="1.35" stroke="#8a8a8a" stroke-width="0.9"/>
<circle cx="48.5" cy="918.0" r="1.35" stroke="#8a8a8a" stroke-width="0.9"/>
<circle cx="17.1" cy="920.9" r="1.35" stroke="#8a8a8a" stroke-width="0.9"/>
<circle cx="20.4" cy="920.9" r="1.35" stroke="#8a8a8a" stroke-width="0.9"/>
<circle cx="23.8" cy="920.9" r="1.35" stroke="#8a8a8a" stroke-width="0.9"/>
<circle cx="27.0" cy="920.9" r="1.35" stroke="#8a8a8a" stroke-width="0.9"/>
<circle cx="30.3" cy="920.9" r="1.35" stroke="#8a8a8a" stroke-width="0.9"/>
<circle cx="33.6" cy="920.9" r="1.35" stroke="#8a8a8a" stroke-width="0.9"/>
<circle cx="36.9" cy="920.9" r="1.35" stroke="#8a8a8a" stroke-width="0.9"/>
<circle cx="40.2" cy="920.9" r="1.35" stroke="#8a8a8a" stroke-width="0.9"/>
<circle cx="43.5" cy="920.9" r="1.35" stroke="#8a8a8a" stroke-width="0.9"/>
<circle cx="46.9" cy="920.9" r="1.35" stroke="#8a8a8a" stroke-width="0.9"/>
<circle cx="15.5" cy="923.7" r="1.35" stroke="#8a8a8a" stroke-width="0.9"/>
<circle cx="18.8" cy="923.7" r="1.35" stroke="#8a8a8a" stroke-width="0.9"/>
<circle cx="22.1" cy="923.7" r="1.35" stroke="#8a8a8a" stroke-width="0.9"/>
<circle cx="25.4" cy="923.7" r="1.35" stroke="#8a8a8a" stroke-width="0.9"/>
<circle cx="28.7" cy="923.7" r="1.35" stroke="#8a8a8a" stroke-width="0.9"/>
<circle cx="32.0" cy="923.7" r="1.35" stroke="#8a8a8a" stroke-width="0.9"/>
<circle cx="35.3" cy="923.7" r="1.35" stroke="#8a8a8a" stroke-width="0.9"/>
<circle cx="38.6" cy="923.7" r="1.35" stroke="#8a8a8a" stroke-width="0.9"/>
<circle cx="41.9" cy="923.7" r="1.35" stroke="#8a8a8a" stroke-width="0.9"/>
<circle cx="45.2" cy="923.7" r="1.35" stroke="#8a8a8a" stroke-width="0.9"/>
<circle cx="48.5" cy="923.7" r="1.35" stroke="#8a8a8a" stroke-width="0.9"/>
<circle cx="17.1" cy="926.6" r="1.35" stroke="#8a8a8a" stroke-width="0.9"/>
<circle cx="20.4" cy="926.6" r="1.35" stroke="#8a8a8a" stroke-width="0.9"/>
<circle cx="23.8" cy="926.6" r="1.35" stroke="#8a8a8a" stroke-width="0.9"/>
<circle cx="27.0" cy="926.6" r="1.35" stroke="#8a8a8a" stroke-width="0.9"/>
<circle cx="30.3" cy="926.6" r="1.35" stroke="#8a8a8a" stroke-width="0.9"/>
<circle cx="33.6" cy="926.6" r="1.35" stroke="#8a8a8a" stroke-width="0.9"/>
<circle cx="36.9" cy="926.6" r="1.35" stroke="#8a8a8a" stroke-width="0.9"/>
<circle cx="40.2" cy="926.6" r="1.35" stroke="#8a8a8a" stroke-width="0.9"/>
<circle cx="43.5" cy="926.6" r="1.35" stroke="#8a8a8a" stroke-width="0.9"/>
<circle cx="46.9" cy="926.6" r="1.35" stroke="#8a8a8a" stroke-width="0.9"/>
<circle cx="18.8" cy="929.4" r="1.35" stroke="#8a8a8a" stroke-width="0.9"/>
<circle cx="22.1" cy="929.4" r="1.35" stroke="#8a8a8a" stroke-width="0.9"/>
<circle cx="25.4" cy="929.4" r="1.35" stroke="#8a8a8a" stroke-width="0.9"/>
<circle cx="28.7" cy="929.4" r="1.35" stroke="#8a8a8a" stroke-width="0.9"/>
<circle cx="32.0" cy="929.4" r="1.35" stroke="#8a8a8a" stroke-width="0.9"/>
<circle cx="35.3" cy="929.4" r="1.35" stroke="#8a8a8a" stroke-width="0.9"/>
<circle cx="38.6" cy="929.4" r="1.35" stroke="#8a8a8a" stroke-width="0.9"/>
<circle cx="41.9" cy="929.4" r="1.35" stroke="#8a8a8a" stroke-width="0.9"/>
<circle cx="45.2" cy="929.4" r="1.35" stroke="#8a8a8a" stroke-width="0.9"/>
<circle cx="23.8" cy="932.3" r="1.35" stroke="#8a8a8a" stroke-width="0.9"/>
<circle cx="27.0" cy="932.3" r="1.35" stroke="#8a8a8a" stroke-width="0.9"/>
<circle cx="30.3" cy="932.3" r="1.35" stroke="#8a8a8a" stroke-width="0.9"/>
<circle cx="33.6" cy="932.3" r="1.35" stroke="#8a8a8a" stroke-width="0.9"/>
<circle cx="36.9" cy="932.3" r="1.35" stroke="#8a8a8a" stroke-width="0.9"/>
<circle cx="40.2" cy="932.3" r="1.35" stroke="#8a8a8a" stroke-width="0.9"/>
<circle cx="28.7" cy="935.2" r="1.35" stroke="#8a8a8a" stroke-width="0.9"/>
<circle cx="32.0" cy="935.2" r="1.35" stroke="#8a8a8a" stroke-width="0.9"/>
<circle cx="35.3" cy="935.2" r="1.35" stroke="#8a8a8a" stroke-width="0.9"/>
<path d="M32.0 897.0 l0.0 -3.5" stroke="#9a9a9a"/><circle cx="32.0" cy="892.7" r="1" fill="#9a9a9a" stroke="none"/>
<path d="M50.2 907.5 l3.0 -1.8" stroke="#9a9a9a"/><circle cx="53.9" cy="905.4" r="1" fill="#9a9a9a" stroke="none"/>
<path d="M50.2 928.5 l3.0 1.8" stroke="#9a9a9a"/><circle cx="53.9" cy="930.6" r="1" fill="#9a9a9a" stroke="none"/>
<path d="M32.0 939.0 l0.0 3.5" stroke="#9a9a9a"/><circle cx="32.0" cy="943.3" r="1" fill="#9a9a9a" stroke="none"/>
<path d="M13.8 928.5 l-3.0 1.8" stroke="#9a9a9a"/><circle cx="10.1" cy="930.6" r="1" fill="#9a9a9a" stroke="none"/>
<path d="M13.8 907.5 l-3.0 -1.8" stroke="#9a9a9a"/><circle cx="10.1" cy="905.4" r="1" fill="#9a9a9a" stroke="none"/>
<path d="M35 905 l5 4 l2 6 l-3 3 z" fill="#9a9a9a" stroke="none" opacity="0.7"/>
<path d="M92.3 892 L98.5 897 V907 L92.3 912 L86 907 V897 Z" stroke="#8e8e8e" stroke-width="1.1"/><path d="M92.3 892 L89 904 L98.5 897 M86 897 L89 904 L92.3 912 M89 904 L98.5 907 M92.3 892 L95.5 902 L98.5 907" stroke="#8e8e8e" stroke-width="0.8"/>
<path d="M92.3 912 V915" stroke="#8e8e8e"/><rect x="87.8" y="913.5" width="9" height="17" fill="#858585" stroke="none"/><path d="M87 929 L81 943 M89.5 930 L84.5 941 L85 945 M97.5 929 L103.5 943 M95 930 L100 941 L99.5 945 M91 930 L90 936 M94 930 L95 936" stroke="#858585" stroke-width="1.9"/><path d="M85 928 H100" stroke="#909090" stroke-width="2"/>
<path d="M175.2 919.0 L175.0 922.7 L173.1 925.9 L172.7 929.7 L170.1 932.5 L168.4 936.3 L164.2 937.3 L160.5 938.3 L156.6 938.3 L153.0 938.7 L149.0 940.4 L145.9 937.4 L142.6 935.9 L139.5 934.1 L135.9 932.5 L132.8 930.0 L131.8 926.3 L130.1 922.8 L132.4 919.0 L132.9 915.7 L131.2 911.5 L134.3 908.9 L135.4 905.1 L139.1 903.4 L142.5 901.9 L145.7 900.1 L149.4 899.8 L153.0 896.8 L156.9 898.2 L160.4 899.9 L164.0 901.1 L167.0 903.3 L168.8 906.5 L173.4 907.9 L174.1 911.8 L176.5 915.1 Z" stroke="#8e8e8e" stroke-width="1.2"/>
<path d="M132.2 926.8l-2.4 1.0 M136.7 904.5l-1.9 -1.8 M153.1 940.1l0.0 2.6 M174.6 924.8l2.5 0.7 M173.4 910.1l2.4 -1.1 M166.7 902.3l1.6 -2.1 M144.1 938.4l-1.0 2.4 M171.1 906.5l2.1 -1.5 M162.0 899.7l1.0 -2.4 M145.6 938.9l-0.9 2.5 M135.1 906.3l-2.1 -1.6 M174.7 913.7l2.5 -0.6 M130.6 919.6l-2.6 0.1 M174.3 912.4l2.5 -0.8 M154.0 940.1l0.1 2.6 M135.7 932.5l-2.0 1.7 M148.6 898.3l-0.5 -2.5 M157.0 939.8l0.5 2.6 M144.9 938.7l-0.9 2.4 M168.9 904.1l1.8 -1.8 M130.7 921.1l-2.6 0.3 M159.0 898.6l0.7 -2.5 M153.9 940.1l0.1 2.6 M163.4 937.7l1.2 2.3 M138.9 935.4l-1.6 2.0 M161.7 938.5l1.0 2.4 M175.1 915.2l2.6 -0.5 M147.3 939.4l-0.7 2.5 M132.2 911.0l-2.4 -1.0 M169.8 933.0l2.0 1.7 M131.1 914.6l-2.5 -0.5 M136.1 932.9l-2.0 1.7 M134.6 931.1l-2.1 1.5 M173.6 927.4l2.4 1.0 M169.0 933.8l1.9 1.8 M163.3 900.2l1.2 -2.3 M139.7 936.0l-1.5 2.1 M153.7 940.1l0.1 2.6 M161.1 938.7l0.9 2.4 M148.3 939.7l-0.5 2.5 M154.8 940.1l0.2 2.6 M174.9 923.6l2.5 0.6 M141.5 900.9l-1.3 -2.2 M140.8 936.7l-1.4 2.2 M165.5 936.5l1.4 2.2 M146.9 898.7l-0.7 -2.5 M171.7 930.6l2.2 1.4 M150.2 940.0l-0.3 2.6 M164.4 900.8l1.3 -2.2 M168.6 934.2l1.8 1.9 M132.0 926.4l-2.4 0.9 M164.6 900.9l1.3 -2.2 M160.6 899.1l0.9 -2.4 M165.1 936.8l1.4 2.2 M139.5 935.9l-1.6 2.1 M149.1 898.2l-0.4 -2.6 M136.9 933.8l-1.9 1.8 M174.7 913.5l2.5 -0.7 M158.8 939.4l0.7 2.5 M174.4 912.6l2.5 -0.8 M130.6 918.4l-2.6 -0.1 M156.2 939.9l0.4 2.6 M131.5 925.2l-2.5 0.8 M168.3 934.5l1.8 1.9 M146.9 898.7l-0.7 -2.5 M151.5 940.1l-0.2 2.6 M171.1 906.5l2.1 -1.5 M133.9 908.0l-2.2 -1.4 M137.8 934.6l-1.8 1.9 M153.5 940.1l0.1 2.6" stroke="#9a9a9a" stroke-width="0.8"/>
<path d="M150.0 908.4 L161.1 911.4 L164.1 922.5 L156.0 930.6 L144.9 927.6 L141.9 916.5 Z" stroke="#8a8a8a" stroke-width="1.1"/>
<path d="M150.0 908.4 L164.1 922.5 L144.9 927.6 Z M161.1 911.4 L150.0 908.4 M156.0 930.6 L164.1 922.5 M141.9 916.5 L144.9 927.6" stroke="#8a8a8a" stroke-width="0.9"/>
<path d="M190 918.5 Q190 909 203 906.5 Q214 903 225 906.5 Q240.5 909 240.5 918.5 Q240.5 928 225 930.5 Q214 934 203 930.5 Q190 928 190 918.5 Z" stroke="#9a9a9a" stroke-width="1.1"/>
<path d="M192 918.5 Q192 911 203.5 908.7 Q214 905.5 224.5 908.7 Q238.5 911 238.5 918.5 Q238.5 926 224.5 928.3 Q214 931.5 203.5 928.3 Q192 926 192 918.5 Z" stroke="#b0b0b0" stroke-width="0.8"/>
<path d="M194 918.5 Q194 912.5 201 913 Q214 916.5 228 913 Q236 912.5 236 918.5 Q236 924.5 228 924 Q214 920.5 201 924 Q194 924.5 194 918.5 Z" stroke="#9a9a9a" stroke-width="1"/>
<ellipse cx="214.5" cy="910.7" rx="8" ry="3" stroke="#9a9a9a" stroke-width="1" fill="#fafafa"/><path d="M209.5 910.7h0.1 M212.8 910.7h0.1 M216.1 910.7h0.1 M219.4 910.7h0.1" stroke="#222" stroke-width="1.3"/>
<ellipse cx="214.5" cy="926.3" rx="8" ry="3" stroke="#9a9a9a" stroke-width="1" fill="#fafafa"/><path d="M209.5 926.3h0.1 M212.8 926.3h0.1 M216.1 926.3h0.1 M219.4 926.3h0.1" stroke="#222" stroke-width="1.3"/>
</svg>
<div class="t lb" style="left:6px;top:589.7px">세포 구조</div>
<div class="t lb" style="left:68.3px;top:589.7px">파라메슘</div>
<div class="t lb" style="left:129px;top:589.7px">파라메슘</div>
<div class="t lb" style="left:187.4px;top:589.7px">개구리 <span style="letter-spacing:-0.9px">...</span></div>
<div class="t lb" style="left:7.7px;top:679.7px">편평세포</div>
<div class="t lb" style="left:67px;top:679.7px">세포 분열</div>
<div class="t lb" style="left:127px;top:679.7px">세포 분<span style="letter-spacing:-0.9px">...</span></div>
<div class="t lb" style="left:203px;top:679.7px">세균</div>
<div class="t lb" style="left:13.7px;top:769.7px">세포막</div>
<div class="t lb" style="left:80.6px;top:769.7px">난자</div>
<div class="t lb" style="left:141.6px;top:769.7px">정액</div>
<div class="t lb" style="left:196.5px;top:769.7px">접합자</div>
<div class="t lb" style="left:4.8px;top:859.7px">세포,동<span style="letter-spacing:-0.9px">...</span></div>
<div class="t lb" style="left:74.6px;top:859.7px">유산균</div>
<div class="t lb" style="left:139.8px;top:859.7px;font-size:12px;letter-spacing:-1.1px;top:860.5px">SARS</div>
<div class="t lb" style="left:187.9px;top:859.7px">담배 모<span style="letter-spacing:-0.9px">...</span></div>
<div class="t lb" style="left:4.6px;top:949.7px">아데노<span style="letter-spacing:-0.9px">...</span></div>
<div class="t lb" style="left:74.9px;top:949.7px">대장균</div>
<div class="t lb" style="left:126.6px;top:949.7px">헤르페<span style="letter-spacing:-0.9px">...</span></div>
<div class="t lb" style="left:187.5px;top:949.7px">폭스 바<span style="letter-spacing:-0.9px">...</span></div>
<!-- color bar -->
<svg style="left:261px;top:957px" width="1616" height="21" viewBox="261 957 1616 21">
<rect x="302.1" y="958" width="16.3" height="17" fill="#b0101f"/>
<rect x="319.4" y="958" width="16.3" height="17" fill="#cc0a2f"/>
<rect x="336.7" y="958" width="16.3" height="17" fill="#e8405a"/>
<rect x="354.1" y="958" width="16.3" height="17" fill="#f56580"/>
<rect x="371.4" y="958" width="16.3" height="17" fill="#f79aab"/>
<rect x="388.7" y="958" width="16.3" height="17" fill="#2a7f8f"/>
<rect x="406.0" y="958" width="16.3" height="17" fill="#38a6c0"/>
<rect x="423.3" y="958" width="16.3" height="17" fill="#41bfdf"/>
<rect x="440.6" y="958" width="16.3" height="17" fill="#5fd8ee"/>
<rect x="458.0" y="958" width="16.3" height="17" fill="#a8eefa"/>
<rect x="475.3" y="958" width="16.3" height="17" fill="#f04e23"/>
<rect x="492.6" y="958" width="16.3" height="17" fill="#fb7a35"/>
<rect x="509.9" y="958" width="16.3" height="17" fill="#fd951f"/>
<rect x="527.2" y="958" width="16.3" height="17" fill="#fdb81e"/>
<rect x="544.6" y="958" width="16.3" height="17" fill="#fdc55e"/>
<rect x="561.9" y="958" width="16.3" height="17" fill="#168f7a"/>
<rect x="579.2" y="958" width="16.3" height="17" fill="#19b096"/>
<rect x="596.5" y="958" width="16.3" height="17" fill="#1bc9ad"/>
<rect x="613.8" y="958" width="16.3" height="17" fill="#6ad8c5"/>
<rect x="631.1" y="958" width="16.3" height="17" fill="#8aeada"/>
<rect x="648.5" y="958" width="16.3" height="17" fill="#9c2a5c"/>
<rect x="665.8" y="958" width="16.3" height="17" fill="#c44c8c"/>
<rect x="683.1" y="958" width="16.3" height="17" fill="#e468a8"/>
<rect x="700.4" y="958" width="16.3" height="17" fill="#f888c8"/>
<rect x="717.7" y="958" width="16.3" height="17" fill="#f2c0dc"/>
<rect x="735.1" y="958" width="16.3" height="17" fill="#5f8a14"/>
<rect x="752.4" y="958" width="16.3" height="17" fill="#76a02a"/>
<rect x="769.7" y="958" width="16.3" height="17" fill="#9abc26"/>
<rect x="787.0" y="958" width="16.3" height="17" fill="#b4d24e"/>
<rect x="804.3" y="958" width="16.3" height="17" fill="#d2e090"/>
<rect x="821.6" y="958" width="16.3" height="17" fill="#2026a8"/>
<rect x="839.0" y="958" width="16.3" height="17" fill="#3440d8"/>
<rect x="856.3" y="958" width="16.3" height="17" fill="#6c44ec"/>
<rect x="873.6" y="958" width="16.3" height="17" fill="#8e6ef4"/>
<rect x="890.9" y="958" width="16.3" height="17" fill="#ae92f6"/>
<rect x="908.2" y="958" width="16.3" height="17" fill="#fcc800"/>
<rect x="925.5" y="958" width="16.3" height="17" fill="#fcdc2c"/>
<rect x="942.9" y="958" width="16.3" height="17" fill="#f0e830"/>
<rect x="960.2" y="958" width="16.3" height="17" fill="#f8f450"/>
<rect x="977.5" y="958" width="16.3" height="17" fill="#fafa7a"/>
<rect x="994.8" y="958" width="16.3" height="17" fill="#9a48d8"/>
<rect x="1012.1" y="958" width="16.3" height="17" fill="#c244e0"/>
<rect x="1029.5" y="958" width="16.3" height="17" fill="#d268f4"/>
<rect x="1046.8" y="958" width="16.3" height="17" fill="#be80f6"/>
<rect x="1064.1" y="958" width="16.3" height="17" fill="#dca0fa"/>
<rect x="1081.4" y="958" width="16.3" height="17" fill="#2a8040"/>
<rect x="1098.7" y="958" width="16.3" height="17" fill="#3aa050"/>
<rect x="1116.0" y="958" width="16.3" height="17" fill="#4cae74"/>
<rect x="1133.4" y="958" width="16.3" height="17" fill="#66bc8a"/>
<rect x="1150.7" y="958" width="16.3" height="17" fill="#90d8ac"/>
<rect x="1168.0" y="958" width="16.3" height="17" fill="#e8302a"/>
<rect x="1185.3" y="958" width="16.3" height="17" fill="#f8443c"/>
<rect x="1202.6" y="958" width="16.3" height="17" fill="#f66060"/>
<rect x="1220.0" y="958" width="16.3" height="17" fill="#fc7878"/>
<rect x="1237.3" y="958" width="16.3" height="17" fill="#fc9088"/>
<rect x="1254.6" y="958" width="16.3" height="17" fill="#2440a0"/>
<rect x="1271.9" y="958" width="16.3" height="17" fill="#3050cc"/>
<rect x="1289.2" y="958" width="16.3" height="17" fill="#3a64ee"/>
<rect x="1306.5" y="958" width="16.3" height="17" fill="#6a88f8"/>
<rect x="1323.9" y="958" width="16.3" height="17" fill="#8eaef6"/>
<rect x="1341.2" y="958" width="16.3" height="17" fill="#7a2a00"/>
<rect x="1358.5" y="958" width="16.3" height="17" fill="#963400"/>
<rect x="1375.8" y="958" width="16.3" height="17" fill="#a84024"/>
<rect x="1393.1" y="958" width="16.3" height="17" fill="#cc5c40"/>
<rect x="1410.5" y="958" width="16.3" height="17" fill="#e07858"/>
<rect x="1427.8" y="958" width="16.3" height="17" fill="#1888d8"/>
<rect x="1445.1" y="958" width="16.3" height="17" fill="#2c9cf0"/>
<rect x="1462.4" y="958" width="16.3" height="17" fill="#44b0fa"/>
<rect x="1479.7" y="958" width="16.3" height="17" fill="#3cc8f8"/>
<rect x="1497.0" y="958" width="16.3" height="17" fill="#6ce0fc"/>
<rect x="1514.4" y="958" width="16.3" height="17" fill="#7a4c34"/>
<rect x="1531.7" y="958" width="16.3" height="17" fill="#905c44"/>
<rect x="1549.0" y="958" width="16.3" height="17" fill="#b47050"/>
<rect x="1566.3" y="958" width="16.3" height="17" fill="#d48864"/>
<rect x="1583.6" y="958" width="16.3" height="17" fill="#f4a070"/>
<rect x="1601.0" y="958" width="16.3" height="17" fill="#888078"/>
<rect x="1618.3" y="958" width="16.3" height="17" fill="#b0ac9c"/>
<rect x="1635.6" y="958" width="16.3" height="17" fill="#ccc8b8"/>
<rect x="1652.9" y="958" width="16.3" height="17" fill="#e4dece"/>
<rect x="1670.2" y="958" width="16.3" height="17" fill="#f2eee0"/>
<rect x="1687.5" y="958" width="16.3" height="17" fill="#1c1c1c"/>
<rect x="1704.9" y="958" width="16.3" height="17" fill="#303030"/>
<rect x="1722.2" y="958" width="16.3" height="17" fill="#444444"/>
<rect x="1739.5" y="958" width="16.3" height="17" fill="#585858"/>
<rect x="1756.8" y="958" width="16.3" height="17" fill="#7c7c7c"/>
<rect x="1774.1" y="958" width="16.3" height="17" fill="#b8b8b8"/>
<rect x="1791.4" y="958" width="16.3" height="17" fill="#cccccc"/>
<rect x="1808.8" y="958" width="16.3" height="17" fill="#dcdcdc"/>
<rect x="1826.1" y="958" width="16.3" height="17" fill="#e6e6e6"/>
<rect x="1843.4" y="958" width="16.3" height="17" fill="#f4f4f4"/>
<rect x="1860.7" y="958" width="16.3" height="17" fill="#ffffff"/>
<g fill="none" stroke="#333" stroke-width="1.6" stroke-linejoin="round" stroke-linecap="round"><path d="M279.5 960.5 L287.5 968 L282.5 973.5 L276 967.5 L282 962.5"/><path d="M277 968 H287 L282.5 973 Z" fill="#333"/></g><circle cx="288.5" cy="972.8" r="1.2" fill="#333"/>
<path d="M291 966.5 L296.5 966.5 L293.8 969.8 Z" fill="#777"/>
</svg>
<!-- status bar -->
<div class="abs" style="left:0;top:977px;width:1920px;height:1px;background:#dadada"></div>
<div class="abs" style="left:0;top:1019px;width:1920px;height:1px;background:#e0e0e0"></div>
<div class="vsep" style="left:54px;top:983px;height:29px;background:#dcdcdc"></div>
<div class="vsep" style="left:202px;top:983px;height:29px;background:#dcdcdc"></div>
<div class="vsep" style="left:257px;top:983px;height:29px;background:#dcdcdc"></div>
<div class="vsep" style="left:357px;top:983px;height:29px;background:#dcdcdc"></div>
<svg style="left:0;top:978px" width="1920" height="42" viewBox="0 978 1920 42" fill="none" stroke-linecap="round" stroke-linejoin="round">
<rect x="19" y="991.5" width="16" height="12.5" stroke="#444" stroke-width="2.2" stroke-linejoin="miter"/><path d="M14 991 V1004.5 M40 991 V1004.5" stroke="#555" stroke-width="2"/>
<path d="M190 994.5 L197.5 994.5 L193.7 998.7 Z" fill="#777"/>
<path d="M229.5 991.5 V1004 M223.2 997.7 H235.8" stroke="#333" stroke-width="2.2" stroke-linecap="butt"/>
<g stroke="#444" stroke-width="2.3"><path d="M1482 993 V989.5 H1486 M1496 989.5 H1500 V993 M1500 1003 V1006.5 H1496 M1486 1006.5 H1482 V1003" stroke-linejoin="miter" stroke-linecap="butt"/></g><path d="M1487 993 H1492.5 L1495.5 996 V1003 H1487 Z" fill="#555"/>
<circle cx="1575.3" cy="998" r="9.3" stroke="#444" stroke-width="2.3"/><path d="M1572.3 993.5 L1579.8 998 L1572.3 1002.5 Z" fill="#444"/>
<path d="M1600.5 998 H1612" stroke="#333" stroke-width="2.4" stroke-linecap="butt"/>
<path d="M1622 998 H1722" stroke="#dcdcdc" stroke-width="3"/><path d="M1622 998 H1640" stroke="#c0c0c0" stroke-width="3"/><circle cx="1641.5" cy="998" r="6" fill="#fff" stroke="#c2c2c2" stroke-width="1.8"/>
<path d="M1737.7 991.9 V1004.1 M1731.6 998 H1743.8" stroke="#333" stroke-width="2.4" stroke-linecap="butt"/>
<path d="M1806 996.3 L1813 996.3 L1809.5 1000.3 Z" fill="#999"/>
<g stroke="#333" stroke-width="2.5" stroke-linejoin="miter" stroke-linecap="butt"><path d="M1837.2 995.3 V990.6 H1842 M1847.6 990.6 H1852.4 V995.3 M1852.4 1001.7 V1006.4 H1847.6 M1842 1006.4 H1837.2 V1001.7"/>
<rect x="1865.5" y="989.4" width="17" height="16.8" rx="0.5"/><path d="M1869.3 997.8 H1878.7 M1871.8 995.2 L1869.2 997.8 L1871.8 1000.4 M1876.2 995.2 L1878.8 997.8 L1876.2 1000.4" stroke-width="1.9" stroke-linejoin="round"/></g>
</svg>
<div class="t" style="left:67px;top:991px;font-size:17.5px;letter-spacing:0.8px;color:#222">페이지-1</div>
<div class="t" style="left:274px;top:991px;font-size:17.5px;letter-spacing:0.6px;color:#1a86f5;font-weight:bold">페이지-1</div>
<div class="t" style="left:1511px;top:991px;font-size:17.5px;letter-spacing:0.8px;color:#222">집중</div>
<div class="t" style="left:1764.5px;top:991px;font-size:15px;color:#222;letter-spacing:-0.3px">70%</div>
<!-- right panel -->
<div class="abs" style="left:1877px;top:174px;width:1px;height:804px;background:#dcdcdc"></div>
<div class="abs" style="left:1878px;top:214px;width:42px;height:42px;background:#0b7af5"></div>
<svg style="left:1878px;top:174px" width="42" height="804" viewBox="1878 174 42 804" fill="none" stroke="#3a3a3a" stroke-width="2.2" stroke-linecap="round" stroke-linejoin="round">
<path d="M1897.5 185.5 L1891 192.5 L1897.5 199.5 M1906.5 185.5 L1900 192.5 L1906.5 199.5" stroke="#666" stroke-width="1.5"/>
<g stroke="#fff"><path d="M1896 224.5 L1908.5 236 L1901 244 L1890.5 234.5 L1899.5 227.5" stroke-width="2.2"/><path d="M1892 235.5 H1907.5 L1901 243 Z" fill="#fff"/></g><path d="M1910 239.5 Q1912 242.3 1912 243.3 A2 2 0 0 1 1908 243.3 Q1908 242.3 1910 239.5 Z" fill="#fff" stroke="none"/>
<g stroke-linejoin="miter" stroke-linecap="butt"><rect x="1890" y="281" width="7" height="7"/><rect x="1890" y="292.5" width="7" height="7"/><rect x="1901.5" y="292.5" width="7" height="7"/><path d="M1905.3 281 H1901.5 V288 H1908.5 V284.3"/><path d="M1907.4 281.2 H1909.6" stroke-width="2.4"/></g>
<g stroke-linejoin="miter"><rect x="1889" y="338" width="21" height="17"/><path d="M1892 352 L1897.5 346 L1901 350 L1903.5 347.5 L1908 352.5 Z" fill="#3a3a3a" stroke-width="1"/><circle cx="1904" cy="343" r="1.2" fill="#3a3a3a" stroke="none"/></g>
<path d="M1899.5 393.5 L1909.5 399.5 L1899.5 405.5 L1889.5 399.5 Z"/><path d="M1889.5 405 L1899.5 411 L1909.5 405"/>
<path d="M1891 448.5 H1904 L1908.5 453 V468.5 H1891 Z" stroke-linejoin="miter"/><path d="M1895.5 456 H1896 M1899 456 H1904.5 M1895.5 460 H1896 M1899 460 H1904.5 M1895.5 464 H1896 M1899 464 H1904.5" stroke-width="1.9"/>
<g stroke-linejoin="miter" stroke-linecap="butt" stroke-width="2.3"><path d="M1890.2 506.8 H1897.3 V510.5 H1901.7 V506.8 H1908.4 V523.8 H1890.2 Z"/><path d="M1890.2 514.8 H1897 M1901.7 523.8 V518 M1901.7 514.2 H1908.4 M1896.5 518.5 V523.8" stroke-width="2"/></g>
<path d="M1893.5 565 H1895.5 Q1898.5 565 1899.8 571.3 Q1901 577.6 1904.3 577.6 H1906.5 M1893.5 577.6 H1895.5 Q1898.5 577.6 1899.8 571.3 Q1901 565 1904.3 565 H1906.5" stroke-width="2.1"/><rect x="1889" y="562.5" width="5.6" height="5" rx="1.3" fill="#3a3a3a" stroke="none"/><rect x="1889" y="575.1" width="5.6" height="5" rx="1.3" fill="#3a3a3a" stroke="none"/><rect x="1905.4" y="562.5" width="5.6" height="5" rx="1.3" fill="#3a3a3a" stroke="none"/><rect x="1905.4" y="575.1" width="5.6" height="5" rx="1.3" fill="#3a3a3a" stroke="none"/>
<g stroke-linejoin="miter"><path d="M1888.5 618.5 H1910.5" /><rect x="1890.5" y="618.5" width="18" height="12.5"/><path d="M1895 636.5 L1897.5 631.5 M1904 636.5 L1901.5 631.5"/><path d="M1897.3 621.5 L1902.8 624.8 L1897.3 628 Z" fill="#3a3a3a" stroke-width="1"/></g>
<path d="M1892.5 677.5 A8.3 8.3 0 1 1 1891.8 685.5" /><path d="M1891 673.5 L1892.3 678.3 L1897 677" stroke-width="1.8"/><path d="M1900 678 V683 L1903.5 685.5" stroke-width="1.8"/>
</svg>
</body>
</html>
